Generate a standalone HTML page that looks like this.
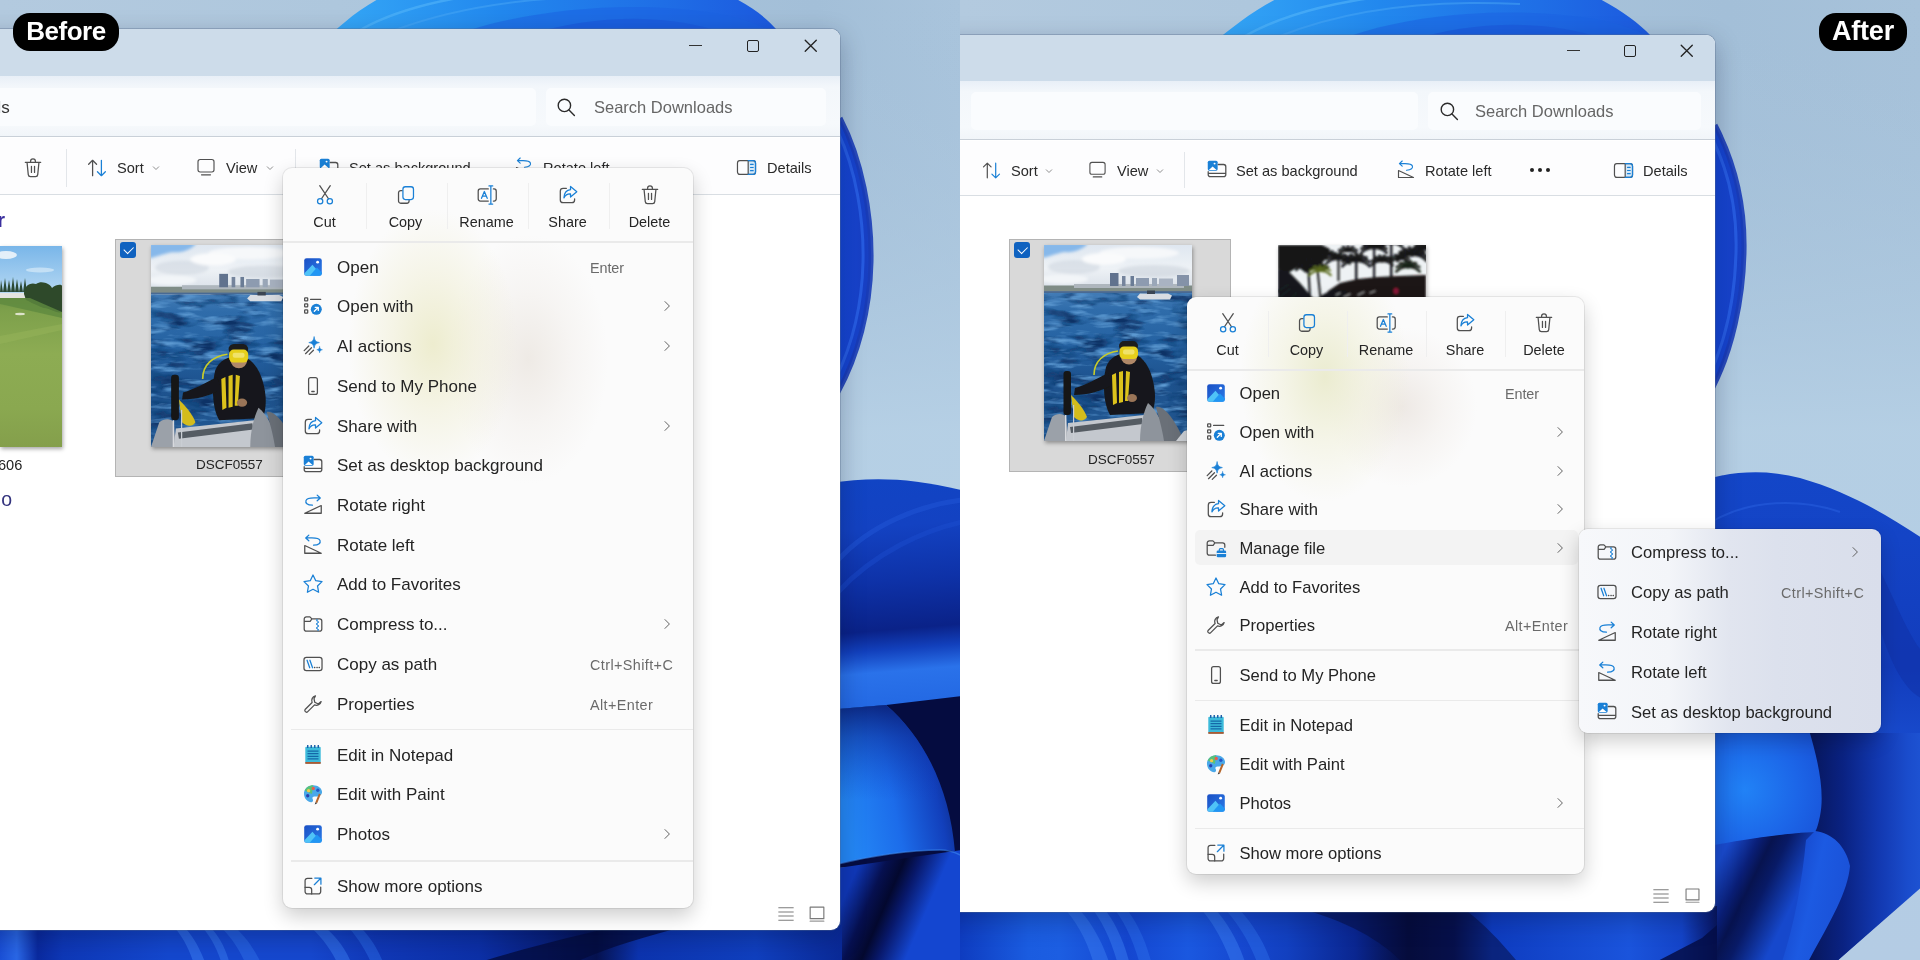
<!DOCTYPE html>
<html lang="en"><head><meta charset="utf-8"><title>Before / After context menu</title>
<style>
*{box-sizing:border-box;margin:0;padding:0}
html,body{width:1920px;height:960px;overflow:hidden;background:#a9c3db;font-family:"Liberation Sans",sans-serif}
.panel{position:absolute;top:0;width:960px;height:960px;overflow:hidden;will-change:transform}
.panel *{position:absolute}
.panel svg{position:static;display:block}
.wall{left:0;top:0;width:960px;height:960px}
.win{background:#fff;border-radius:9px;overflow:hidden;box-shadow:0 0 0 1px rgba(90,110,140,.35),0 8px 26px rgba(0,10,40,.28)}
.title{left:0;right:0;top:0;background:#cddcea}
.nav{left:0;right:0;background:linear-gradient(#e8eff7 0,#f3f7fb 18%,#f6f9fc 80%,#f1f5f9 100%);border-bottom:1.5px solid #c9d0d8}
.box{background:#fafcfe;border-radius:5px}
.tool{left:0;right:0;background:#fdfdfe;border-bottom:1.5px solid #d9dee3}
.wc-min{width:13px;height:1.3px;background:#333}
.wc-max{width:12px;height:12px;border:1.4px solid #222;border-radius:2px}
.t{white-space:nowrap;line-height:20px;color:#252525}
.tb{font-size:14.6px;color:#2a2a2a}
.hdr{font-size:17px;font-weight:bold;color:#3a2f9e;line-height:22px}
.vsep2{width:1px;background:#e3e6ea}
.tile{background:#d9d9d9;border:1px solid #b4b4b4}
.cb{left:4px;top:2px;width:16px;height:16px;border-radius:3px;background:#0f62c0}
.cb:after{content:"";position:absolute;left:4px;top:4px;width:8px;height:4.5px;border-left:1.4px solid #fff;border-bottom:1.4px solid #fff;transform:rotate(-45deg)}
.thumb{overflow:hidden;box-shadow:1px 2px 4px rgba(0,0,0,.35)}
.golf{overflow:hidden;box-shadow:1px 2px 4px rgba(0,0,0,.35)}
.palm{overflow:hidden;box-shadow:1px 2px 4px rgba(0,0,0,.3)}
.menu{background:#fbfbfb;border-radius:9px;box-shadow:0 0 0 1px rgba(0,0,0,.07),0 8px 20px rgba(0,0,0,.2);overflow:hidden}
.mi{left:0;right:0;color:#242424;white-space:nowrap}
.mic{top:50%;margin-top:-12.3px;margin-left:-.5px}
.mit{top:0}
.msc{top:0;font-size:14.4px;color:#6a6a6a;letter-spacing:.4px}
.mch{top:50%;margin-top:-9px}
.tbi{}
.tbl{width:80px;text-align:center;font-size:14.4px;line-height:20px;color:#252525}
.vsep{width:1px;background:#efefef}
.hsep{height:1.5px;background:#eaeaea}
.hl{background:#f3f3f3;border-radius:5px}
.sub{background:linear-gradient(90deg,#f7f8fb 0,#f3f5f9 30%,#eaedf4 40%,#e1e5ef 50%,#dce1ed 65%,#d9deeb 100%)}
.pill{height:38px;border-radius:17px;background:#000;color:#fff;font-weight:bold;font-size:26px;line-height:37px;text-align:center;letter-spacing:-.5px}
.dots i{width:4px;height:4px;border-radius:50%;background:#222;top:0}
.dots i:nth-child(2){left:8px}.dots i:nth-child(3){left:16px}
.glowL{left:0;top:1px;width:410px;height:420px;background:radial-gradient(ellipse 85px 135px at 150px 175px,rgba(234,233,196,.8),rgba(238,236,205,.45) 50%,rgba(244,243,225,0) 100%),radial-gradient(ellipse 80px 125px at 245px 190px,rgba(233,227,220,.7),rgba(238,233,228,.35) 55%,rgba(245,243,240,0) 100%)}
.glowR{left:0;top:0;width:397px;height:300px;background:radial-gradient(ellipse 85px 125px at 138px 80px,rgba(232,233,200,.85),rgba(237,237,208,.45) 50%,rgba(244,244,228,0) 100%),radial-gradient(ellipse 75px 80px at 215px 110px,rgba(232,225,219,.7),rgba(238,232,227,.35) 55%,rgba(245,243,240,0) 100%)}

</style></head>
<body>
<div class="panel" style="left:0">
<div class="wall"><svg width="960" height="960" viewBox="0 0 960 960">
<defs><linearGradient id="bga" x1="0" y1="0" x2="1" y2="0"><stop offset="0" stop-color="#b3cadf"/><stop offset="0.35" stop-color="#aec7dd"/><stop offset="0.85" stop-color="#a3bfd8"/><stop offset="1" stop-color="#a9c4dc"/></linearGradient><linearGradient id="bgva" x1="0" y1="0" x2="0" y2="1"><stop offset="0" stop-color="#a3bfd8" stop-opacity="0"/><stop offset=".45" stop-color="#b7d1e6" stop-opacity=".9"/><stop offset="1" stop-color="#b7d1e6"/></linearGradient><linearGradient id="domea" x1="338" y1="0" x2="880" y2="0" gradientUnits="userSpaceOnUse"><stop offset="0" stop-color="#34a6f6"/><stop offset="0.3" stop-color="#2288ee"/><stop offset="0.6" stop-color="#1f6ee6"/><stop offset="0.82" stop-color="#1c58de"/><stop offset="0.93" stop-color="#1546d4"/><stop offset="1" stop-color="#1a3cba"/></linearGradient><linearGradient id="lba" x1="850" y1="480" x2="870" y2="725" gradientUnits="userSpaceOnUse"><stop offset="0" stop-color="#1144c4"/><stop offset="0.2" stop-color="#1342c2"/><stop offset="0.42" stop-color="#0e32a8"/><stop offset="0.62" stop-color="#0a2288"/><stop offset="0.7" stop-color="#1240bc"/><stop offset="0.79" stop-color="#2a72ea"/><stop offset="1" stop-color="#2064e0"/></linearGradient><linearGradient id="peta" x1="840" y1="790" x2="962" y2="765" gradientUnits="userSpaceOnUse"><stop offset="0" stop-color="#2488f6"/><stop offset="0.4" stop-color="#1c6cea"/><stop offset="0.75" stop-color="#1240bc"/><stop offset="1" stop-color="#0a2070"/></linearGradient><linearGradient id="petsh" x1="0" y1="704" x2="0" y2="800" gradientUnits="userSpaceOnUse"><stop offset="0" stop-color="#081a6e" stop-opacity=".85"/><stop offset=".35" stop-color="#0c2a90" stop-opacity=".5"/><stop offset="1" stop-color="#1040c0" stop-opacity="0"/></linearGradient><linearGradient id="bota" x1="0" y1="0" x2="840" y2="0" gradientUnits="userSpaceOnUse"><stop offset="0" stop-color="#1a50d8"/><stop offset="0.02" stop-color="#2a68e8"/><stop offset="0.045" stop-color="#0a2aa0"/><stop offset="0.075" stop-color="#0e38b8"/><stop offset="0.2" stop-color="#1448d0"/><stop offset="0.37" stop-color="#1648d0"/><stop offset="0.45" stop-color="#1038b8"/><stop offset="0.57" stop-color="#0c30a8"/><stop offset="0.65" stop-color="#08207c"/><stop offset="0.71" stop-color="#061250"/><stop offset="0.76" stop-color="#0c34b0"/><stop offset="0.9" stop-color="#1040c0"/><stop offset="1" stop-color="#0a2a98"/></linearGradient><linearGradient id="bot2a" x1="848" y1="889" x2="922" y2="921" gradientUnits="userSpaceOnUse"><stop offset="0" stop-color="#1038b8"/><stop offset="0.3" stop-color="#061050"/><stop offset="0.5" stop-color="#03082e"/><stop offset="0.68" stop-color="#08186a"/><stop offset="1" stop-color="#1446d0"/></linearGradient></defs>
<rect width="960" height="960" fill="url(#bga)"/>
<rect x="835" y="0" width="125" height="960" fill="url(#bgva)"/>
<path d="M318 46 C338 28 356 10 384 -4 L730 -4 C752 6 766 18 777 30 C806 56 826 88 840 118 C862 160 872 215 871 262 C870 310 858 356 838 392 L700 392 L700 46 Z" fill="url(#domea)"/>
<path d="M360 30 C420 -4 520 -14 600 -12" stroke="#58b8fa" stroke-width="2.5" fill="none" opacity=".55"/>
<path d="M395 30 C470 2 560 -6 640 -2" stroke="#49a8f6" stroke-width="2" fill="none" opacity=".5"/>
<path d="M470 30 C540 8 640 0 720 14 C745 19 760 26 770 30 Z" fill="#1b62e2" opacity=".55"/>
<path d="M545 30 C600 16 660 14 715 30 Z" fill="#1a56da" opacity=".6"/>
<path d="M840 118 C862 160 872 215 871 262 C870 310 858 356 838 392" stroke="#1a3cb6" stroke-width="5" fill="none" opacity=".9"/>
<path d="M838 132 C856 170 864 220 863 262 C862 305 852 345 836 378" stroke="#2a62e6" stroke-width="3" fill="none" opacity=".8"/>
<path d="M830 483 C870 477 910 477 965 491 L965 730 L830 730 Z" fill="url(#lba)"/>
<path d="M838 560 C870 525 920 505 962 500" stroke="#2458da" stroke-width="5" fill="none" opacity=".45"/>
<path d="M838 592 C875 552 925 530 962 522" stroke="#1e50d2" stroke-width="5" fill="none" opacity=".4"/>
<path d="M838 709 L886 705 L962 696 L962 860 L838 868 Z" fill="#050c40"/>
<path d="M838 868 L838 965 L962 965 L962 850 Z" fill="url(#bot2a)"/>
<path d="M838 709 L886 705 C925 738 950 790 955 852 C950 850 945 850 940 850 C910 850 870 856 838 864 Z" fill="url(#peta)"/>
<path d="M838 709 L886 705 C925 738 950 790 955 852 C950 850 945 850 940 850 C910 850 870 856 838 864 Z" fill="url(#petsh)"/>
<path d="M838 864 C870 856 910 850 940 850 C948 850 955 852 962 856" stroke="#3f8ef4" stroke-width="1.5" fill="none" opacity=".55"/>
<rect x="0" y="925" width="842" height="40" fill="url(#bota)"/>
<path d="M172 925 C182 935 190 950 194 965 L206 965 C200 948 192 934 182 925 Z" fill="#3a7cf0" opacity=".55"/>
<path d="M200 925 C210 935 218 950 222 965 L230 965 C226 948 218 934 208 925 Z" fill="#3a7cf0" opacity=".5"/>
<path d="M218 925 C230 935 240 950 246 965 L262 965 C254 948 244 934 232 925 Z" fill="#2f70ea" opacity=".5"/>
<path d="M308 925 C320 935 332 950 338 965 L352 965 C346 948 334 934 322 925 Z" fill="#3a7cf0" opacity=".5"/>
<path d="M346 925 C356 935 366 950 372 965 L384 965 C378 948 368 934 358 925 Z" fill="#2f70ea" opacity=".45"/>
<path d="M470 965 C520 950 570 936 625 925 L690 925 C640 938 600 950 570 965 Z" fill="#040c3e" opacity=".75"/>
</svg></div>
<div class="win" style="left:-30px;top:28.6px;width:870px;height:901.4px">
<div class="title" style="height:47.4px"></div>
<div class="nav" style="top:47.4px;height:61px"><div class="box" style="left:0;top:12px;width:566px;height:38px"></div><div class="box" style="left:576px;top:12px;width:280px;height:38px"></div></div>
<div class="tool" style="top:109.4px;height:57px"></div>
</div>
<i class="wc-min" style="left:689px;top:45px"></i><i class="wc-max" style="left:747px;top:40px"></i>
<span class="wc-x" style="left:803.2px;top:38.3px"><svg width="15.5" height="15.5" viewBox="0 0 14 14" fill="none" stroke-linecap="round" stroke-linejoin="round" stroke-width="1.15" ><path d='M2 2 L12 12 M12 2 L2 12' stroke='#222' stroke-width='1.2'/></svg></span>
<span class="t" style="left:-31px;top:98px;font-size:17px;color:#333">loads</span>
<span class="abs" style="left:556px;top:97px"><svg width="20" height="20" viewBox="0 0 20 20" fill="none" stroke-linecap="round" stroke-linejoin="round" stroke-width="1.15" ><circle cx="8.4" cy="8.4" r="6.2" stroke="#2b2b2b" stroke-width="1.4"/><path d="M13 13 L18.4 18.4" stroke="#2b2b2b" stroke-width="1.4"/></svg></span>
<span class="t" style="left:594px;top:97px;font-size:16.5px;color:#666">Search Downloads</span>
<span class="abs" style="left:22px;top:157px"><svg width="22" height="22" viewBox="0 0 20 20" fill="none" stroke-linecap="round" stroke-linejoin="round" stroke-width="1.15" ><path d="M3 4.8 H17 M7.8 4.6 V3.8 A2.2 2.2 0 0 1 12.2 3.8 V4.6 M4.6 5 L5.7 16 A2 2 0 0 0 7.7 17.8 H12.3 A2 2 0 0 0 14.3 16 L15.4 5 M8.6 8.5 V14 M11.4 8.5 V14" stroke="#505050"/></svg></span>
<i class="vsep2" style="left:66px;top:149px;height:38px"></i>
<span class="abs" style="left:86px;top:157px"><svg width="22" height="22" viewBox="0 0 20 20" fill="none" stroke-linecap="round" stroke-linejoin="round" stroke-width="1.15" ><path d="M6 17 V3 M2.4 6.6 L6 3 L9.6 6.6" stroke="#505050"/><path d="M14 3 V17 M10.4 13.4 L14 17 L17.6 13.4" stroke="#1a80d6"/></svg></span><span class="t tb" style="left:117px;top:158px">Sort</span><span class="abs" style="left:150px;top:162px"><svg width="12" height="12" viewBox="0 0 20 20" fill="none" stroke-linecap="round" stroke-linejoin="round" stroke-width="1.15" ><path d="M5.5 8 L10 12.5 L14.5 8" stroke="#8a8a8a" stroke-width="1.6"/></svg></span>
<span class="abs" style="left:196px;top:157px"><svg width="20" height="20" viewBox="0 0 20 20" fill="none" stroke-linecap="round" stroke-linejoin="round" stroke-width="1.15" ><rect x="2" y="2.5" width="16" height="12.5" rx="2.2" stroke="#505050"/><path d="M5.5 17.8 H14.5" stroke="#505050"/></svg></span><span class="t tb" style="left:226px;top:158px">View</span><span class="abs" style="left:264px;top:162px"><svg width="12" height="12" viewBox="0 0 20 20" fill="none" stroke-linecap="round" stroke-linejoin="round" stroke-width="1.15" ><path d="M5.5 8 L10 12.5 L14.5 8" stroke="#8a8a8a" stroke-width="1.6"/></svg></span>
<i class="vsep2" style="left:295px;top:149px;height:38px"></i>
<span class="abs" style="left:318px;top:157px"><svg width="22" height="22" viewBox="0 0 20 20" fill="none" stroke-linecap="round" stroke-linejoin="round" stroke-width="1.15" ><path d="M11 5 H16 A2 2 0 0 1 18 7 V14 A2 2 0 0 1 16 16 H4 A2 2 0 0 1 2 14 V11.5 M2.2 13 H17.8" stroke="#505050"/><rect x="1.6" y="1.6" width="9" height="9" rx="1.4" fill="#1a80d6" stroke="none"/><path d="M2.6 10 L6 6.8 L9.6 10 Z" fill="#fff" stroke="none"/><circle cx="7.8" cy="4.2" r=".9" fill="#fff" stroke="none"/></svg></span><span class="t tb" style="left:349px;top:158px">Set as background</span>
<span class="abs" style="left:514px;top:157px"><svg width="20" height="20" viewBox="0 0 20 20" fill="none" stroke-linecap="round" stroke-linejoin="round" stroke-width="1.15" ><path d="M17.5 17.5 H2.5 V10.5 Z" stroke="#505050"/><path d="M10.5 10.2 C15.5 10 17 8 16.4 6 C15.8 4.2 13 3.6 9 3.6 H3.6 M6.2 1 L3.4 3.6 L6.2 6.2" stroke="#1a80d6"/></svg></span><span class="t tb" style="left:543px;top:158px">Rotate left</span>
<span class="abs" style="left:736px;top:157px"><svg width="21" height="21" viewBox="0 0 20 20" fill="none" stroke-linecap="round" stroke-linejoin="round" stroke-width="1.15" ><path d="M11.6 3.4 H16.4 A2.2 2.2 0 0 1 18.6 5.6 V14.4 A2.2 2.2 0 0 1 16.4 16.6 H11.6 Z" fill="#d4e9f9" stroke="none"/><rect x="1.4" y="3.4" width="17.2" height="13.2" rx="2.2" stroke="#505050"/><path d="M11.6 3.4 V16.6" stroke="#505050"/><path d="M13.8 7 H16.4 M13.8 10 H16.4 M13.8 13 H16.4" stroke="#1a80d6"/><path d="M11.6 3.4 H16.4 A2.2 2.2 0 0 1 18.6 5.6 V14.4 A2.2 2.2 0 0 1 16.4 16.6 H11.6" stroke="#1a80d6"/></svg></span><span class="t tb" style="left:767px;top:158px">Details</span>
<span class="t hdr" style="left:-2.8px;top:209px;font-size:20px">r</span>
<div class="golf" style="left:0px;top:245.5px;width:62px;height:201px"><svg width="62" height="201" viewBox="0 0 62 201">
<defs>
<linearGradient id="gsky" x1="0" y1="0" x2="0" y2="1"><stop offset="0" stop-color="#79b6e9"/><stop offset="1" stop-color="#b9daf3"/></linearGradient>
<linearGradient id="ggr" x1="0" y1="46" x2="0" y2="201" gradientUnits="userSpaceOnUse"><stop offset="0" stop-color="#6b9143"/><stop offset=".12" stop-color="#7da04b"/><stop offset=".4" stop-color="#8dac53"/><stop offset=".75" stop-color="#8aa850"/><stop offset="1" stop-color="#849f4b"/></linearGradient>
<filter id="gbl" x="-5%" y="-5%" width="110%" height="110%"><feGaussianBlur stdDeviation=".6"/></filter>
</defs>
<rect width="62" height="201" fill="url(#ggr)"/>
<rect width="62" height="50" fill="url(#gsky)"/>
<g filter="url(#gbl)">
<ellipse cx="6" cy="9" rx="11" ry="4" fill="#eef5fb" opacity=".9"/>
<ellipse cx="40" cy="24" rx="14" ry="2.5" fill="#d6eaf8" opacity=".7"/>
<path d="M0 46 L1 34 L3 46 L5 32 L7 46 L9 34 L11 46 L13 31 L15 46 L17 33 L19 46 L21 35 L23 46 L25 32 L27 46 Z" fill="#2c4a34"/>
<rect x="0" y="47" width="28" height="5" fill="#e4e4e0"/>
<path d="M24 48 C24 40 30 36 36 38 C42 34 50 38 52 42 C56 38 62 38 62 40 V66 C56 68 50 62 44 62 C38 60 30 56 26 54 Z" fill="#2d4a2a"/>
<path d="M0 52 H30 L62 66 V72 L0 58 Z" fill="#5f8a3e" opacity=".8"/>
<ellipse cx="20" cy="68" rx="5" ry="1.2" fill="#e8ead8" opacity=".9"/>
<path d="M0 90 L62 78 V84 L0 98 Z" fill="#96b35a" opacity=".5"/>
</g></svg></div>
<span class="t" style="left:-2px;top:455px;font-size:14.6px;color:#222">606</span>
<span class="t" style="left:1.2px;top:488px;font-size:19.5px;color:#34347e;line-height:22px">o</span>
<div class="tile" style="left:115px;top:239px;width:228px;height:238px"><i class="cb"></i>
<div class="thumb" style="left:35px;top:5px;width:153px;height:202px"><svg width="100%" height="100%" viewBox="0 0 148 196" preserveAspectRatio="none">
<defs>
<linearGradient id="seaa" x1="0" y1="47" x2="0" y2="196" gradientUnits="userSpaceOnUse"><stop offset="0" stop-color="#437cb6"/><stop offset=".12" stop-color="#2f6caa"/><stop offset=".35" stop-color="#2562a2"/><stop offset=".6" stop-color="#1d528e"/><stop offset="1" stop-color="#225892"/></linearGradient>
<linearGradient id="skya" x1="0" y1="0" x2="0" y2="47" gradientUnits="userSpaceOnUse"><stop offset="0" stop-color="#dfe7f0"/><stop offset=".5" stop-color="#eef2f6"/><stop offset="1" stop-color="#d6dde6"/></linearGradient>
<filter id="wda" color-interpolation-filters="sRGB" x="0" y="0" width="100%" height="100%"><feTurbulence type="fractalNoise" baseFrequency="0.03 0.1" numOctaves="3" seed="4"/><feColorMatrix type="matrix" values="0 0 0 0 0.05  0 0 0 0 0.2  0 0 0 0 0.4  3 0 0 0 -1.36"/></filter>
<filter id="wla" color-interpolation-filters="sRGB" x="0" y="0" width="100%" height="100%"><feTurbulence type="fractalNoise" baseFrequency="0.04 0.16" numOctaves="3" seed="11"/><feColorMatrix type="matrix" values="0 0 0 0 0.36  0 0 0 0 0.6  0 0 0 0 0.82  3 0 0 0 -1.5"/></filter>
<filter id="bla" x="-5%" y="-5%" width="110%" height="110%"><feGaussianBlur stdDeviation=".7"/></filter>
<filter id="bl2a" x="-5%" y="-5%" width="110%" height="110%"><feGaussianBlur stdDeviation="1.6"/></filter>
</defs>
<rect width="148" height="196" fill="url(#seaa)"/>
<rect width="148" height="48" fill="url(#skya)"/>
<g filter="url(#bl2a)">
<path d="M-2 -2 H44 C40 4 30 8 20 7 C10 9 4 12 -2 13 Z" fill="#86b8ea"/>
<ellipse cx="30" cy="22" rx="26" ry="7" fill="#c9d2dc" opacity=".5"/>
<ellipse cx="95" cy="8" rx="40" ry="6" fill="#f6f8fa"/>
<ellipse cx="110" cy="26" rx="36" ry="6" fill="#c9d0d9" opacity=".55"/>
<ellipse cx="60" cy="14" rx="22" ry="6" fill="#fafbfc"/>
<ellipse cx="20" cy="34" rx="24" ry="5" fill="#f2f5f8"/>
</g>
<g filter="url(#bla)">
<rect x="-1" y="40.5" width="150" height="6.5" fill="#7f8c86"/>
<rect x="30" y="39" width="110" height="4" fill="#aeb6bd"/>
<rect x="66" y="28" width="8.5" height="13" fill="#60728e"/><rect x="78" y="31" width="3.5" height="10" fill="#74849c"/><rect x="86.5" y="31" width="3.5" height="10" fill="#6b7c96"/><rect x="92" y="33" width="13" height="8" fill="#8d9bb0"/><rect x="108" y="33" width="5" height="8" fill="#9aa7b8"/><rect x="115" y="33.5" width="14" height="7.5" fill="#a9b3c2"/><rect x="133" y="30" width="12" height="11" fill="#8492a8"/>
<rect x="-1" y="46.2" width="150" height="1.8" fill="#4a6a94"/>
<rect x="0" y="48" width="148" height="148" filter="url(#wda)"/><rect x="0" y="48" width="148" height="148" filter="url(#wla)"/>
<path d="M93 52 L96 48.5 H124 L128 50.5 L126 54.5 H96 Z" fill="#d9dde3"/><rect x="103" y="45.5" width="8" height="3.5" fill="#3a4452"/>
<path d="M50 130 C50 116 60 108 74 106" stroke="#c8cc2a" stroke-width="1.6" fill="none"/>
<path d="M62 122 C66 112 74 108 86 108 C96 109 104 118 108 132 C112 146 112 158 108 168 L66 170 C60 160 58 140 62 122 Z" fill="#17181a"/>
<path d="M64 128 C52 134 42 140 31 143 L30 150 C44 150 58 146 68 140 Z" fill="#17181a"/>
<rect x="75" y="96" width="19" height="10" rx="5" fill="#1c1c1c"/>
<ellipse cx="85" cy="112" rx="8" ry="7.5" fill="#b08868"/>
<rect x="75.5" y="101.5" width="18.5" height="12.5" rx="4.5" fill="#e6cf1c"/><rect x="79" y="104.5" width="11.5" height="5" rx="2" fill="#f0e26a"/>
<path d="M68 130 L72 128 L73 158 L69 160 Z M75 127 L79 126 L79 157 L75 158 Z M82 126 L86 127 L84 156 L81 156 Z" fill="#dcc21e"/>
<ellipse cx="88" cy="153" rx="5" ry="4" fill="#9a7458"/>
<rect x="19.5" y="126" width="7.5" height="44" rx="3" fill="#141516"/>
<path d="M27 150 C33 156 40 164 43 172 C40 177 34 176 30 172 Z" fill="#d4bc1c"/>
<path d="M0 196 L8 172 C12 168 20 168 22 172 L24 196 Z" fill="#9ba1a9"/>
<path d="M22 196 L24 178 L100 170 L104 196 Z" fill="#c4c8ce"/>
<path d="M26 182 L98 173 L99 179 L27 188 Z" fill="#555b63"/>
<path d="M96 196 C96 180 100 166 104 158 C112 164 120 180 124 196 Z" fill="#8e949c"/>
<path d="M120 196 C118 182 114 170 112 162 C120 160 132 176 140 196 Z" fill="#6a7078"/>
<path d="M132 196 L140 186 L148 184 V196 Z" fill="#d0d4d9"/>
<rect x="21" y="170" width="1.4" height="26" fill="#d8dade"/><rect x="29" y="160" width="1.2" height="36" fill="#caced4"/>
</g>
</svg></div>
<span class="t" style="left:80px;top:215px;font-size:13.5px;color:#222">DSCF0557</span></div>
<span class="abs" style="left:776.5px;top:905px"><svg width="18" height="18" viewBox="0 0 20 20" fill="none" stroke-linecap="round" stroke-linejoin="round" stroke-width="1.15" ><path d="M1.5 3 H18.5 M1.5 7.7 H18.5 M1.5 12.3 H18.5 M1.5 17 H18.5" stroke="#7c7c7c" stroke-width="1.2" stroke-linecap="butt"/></svg></span><span class="abs" style="left:808px;top:905px"><svg width="18" height="18" viewBox="0 0 20 20" fill="none" stroke-linecap="round" stroke-linejoin="round" stroke-width="1.15" ><rect x="2.4" y="2.4" width="15.2" height="12.8" stroke="#7a7a7a" stroke-width="1.3"/><path d="M2.4 18 H17.6" stroke="#999" stroke-width="1.3"/></svg></span>
<div class="menu" style="left:283px;top:168px;width:410px;height:740px"><div class="glowL"></div>
<span class="tbi" style="left:30.5px;top:15.5px"><svg width="22" height="22" viewBox="0 0 20 20" fill="none" stroke-linecap="round" stroke-linejoin="round" stroke-width="1.15" ><path d="M5.2 1.5 L13.2 13.4 M14.8 1.5 L6.8 13.4" stroke="#505050"/><circle cx="5.6" cy="15.6" r="2.4" stroke="#1a80d6"/><circle cx="14.4" cy="15.6" r="2.4" stroke="#1a80d6"/></svg></span><span class="tbl" style="left:1.5px;top:43.5px">Cut</span><span class="tbi" style="left:111.5px;top:15.5px"><svg width="22" height="22" viewBox="0 0 20 20" fill="none" stroke-linecap="round" stroke-linejoin="round" stroke-width="1.15" ><path d="M6.5 6 H5.2 A2 2 0 0 0 3.2 8 V15.5 A2 2 0 0 0 5.2 17.5 H10.8 A2 2 0 0 0 12.8 15.5 V14.5" stroke="#505050"/><rect x="7.2" y="2.5" width="9.6" height="11.6" rx="2.2" stroke="#1a80d6"/></svg></span><span class="tbl" style="left:82.5px;top:43.5px">Copy</span><span class="tbi" style="left:192.5px;top:15.5px"><svg width="22" height="22" viewBox="0 0 20 20" fill="none" stroke-linecap="round" stroke-linejoin="round" stroke-width="1.15" ><path d="M11.2 4.5 H4 A2 2 0 0 0 2 6.5 V13.5 A2 2 0 0 0 4 15.5 H11.2 M15.8 4.5 H16.4 A2 2 0 0 1 18.4 6.5 V13.5 A2 2 0 0 1 16.4 15.5 H15.8" stroke="#505050"/><path d="M5 13 L7.6 6.8 L10.2 13 M5.9 11 H9.3" stroke="#1a80d6"/><path d="M13.5 1.8 V18.2 M11.8 1.8 H15.2 M11.8 18.2 H15.2" stroke="#1a80d6"/></svg></span><span class="tbl" style="left:163.5px;top:43.5px">Rename</span><span class="tbi" style="left:273.5px;top:15.5px"><svg width="22" height="22" viewBox="0 0 20 20" fill="none" stroke-linecap="round" stroke-linejoin="round" stroke-width="1.15" ><path d="M8.5 4 H5.5 A2.5 2.5 0 0 0 3 6.5 V14.5 A2.5 2.5 0 0 0 5.5 17 H13.5 A2.5 2.5 0 0 0 16 14.5 V13.5" stroke="#505050"/><path d="M12.3 2.2 L18 7 L12.3 11.8 V9 C9.5 8.8 7.6 10 6.3 12.6 C6.5 8.4 8.6 5.6 12.3 5.2 Z" stroke="#1a80d6"/></svg></span><span class="tbl" style="left:244.5px;top:43.5px">Share</span><span class="tbi" style="left:355.5px;top:15.5px"><svg width="22" height="22" viewBox="0 0 20 20" fill="none" stroke-linecap="round" stroke-linejoin="round" stroke-width="1.15" ><path d="M3 4.8 H17 M7.8 4.6 V3.8 A2.2 2.2 0 0 1 12.2 3.8 V4.6 M4.6 5 L5.7 16 A2 2 0 0 0 7.7 17.8 H12.3 A2 2 0 0 0 14.3 16 L15.4 5 M8.6 8.5 V14 M11.4 8.5 V14" stroke="#505050"/></svg></span><span class="tbl" style="left:326.5px;top:43.5px">Delete</span><i class="vsep" style="left:83px;top:15px;height:46px"></i><i class="vsep" style="left:164px;top:15px;height:46px"></i><i class="vsep" style="left:245px;top:15px;height:46px"></i><i class="vsep" style="left:326px;top:15px;height:46px"></i>
<i class="hsep" style="top:73px;left:0;right:0"></i>
<div class="mi" style="top:81px;height:38px;line-height:38px;font-size:17px"><span class="mic" style="left:19px"><svg width="22" height="22" viewBox="0 0 20 20" fill="none" stroke-linecap="round" stroke-linejoin="round" stroke-width="1.15" ><defs><linearGradient id="pg17" x1="0" y1="0" x2="1" y2="1"><stop offset="0" stop-color="#1a4fc4"/><stop offset="1" stop-color="#2a7be8"/></linearGradient></defs><rect x="2" y="2" width="16" height="16" rx="2.2" fill="url(#pg17)" stroke="none"/><path d="M2 16 L9.5 8 L13 12 L10 18 H4.2 A2.2 2.2 0 0 1 2 15.8 Z" fill="#4fc3f7" stroke="none"/><path d="M7 18 L13.6 10.5 L18 15 V15.8 A2.2 2.2 0 0 1 15.8 18 Z" fill="#2196f3" stroke="none"/><circle cx="14.2" cy="5.6" r="1.3" fill="#fff" stroke="none"/></svg></span><span class="mit" style="left:54px">Open</span><span class="msc" style="left:307px;letter-spacing:-.1px">Enter</span></div>
<div class="mi" style="top:120px;height:38px;line-height:38px;font-size:17px"><span class="mic" style="left:19px"><svg width="22" height="22" viewBox="0 0 20 20" fill="none" stroke-linecap="round" stroke-linejoin="round" stroke-width="1.15" ><rect x="2.4" y="2.6" width="2.8" height="2.8" rx=".6" stroke="#505050"/><rect x="2.4" y="8.1" width="2.8" height="2.8" rx=".6" stroke="#505050"/><rect x="2.4" y="13.6" width="2.8" height="2.8" rx=".6" stroke="#505050"/><path d="M7.8 4 H17" stroke="#505050"/><circle cx="13" cy="13" r="5" fill="#1a80d6" stroke="none"/><path d="M11.2 14.8 L14.6 11.4 M12 11.2 H14.8 V14" stroke="#fff" stroke-width="1.2"/></svg></span><span class="mit" style="left:54px">Open with</span><span class="mch" style="left:376px"><svg width="16" height="16" viewBox="0 0 20 20" fill="none" stroke-linecap="round" stroke-linejoin="round" stroke-width="1.15" ><path d="M7.5 4.5 L13 10 L7.5 15.5" stroke="#5a5a5a" stroke-width="1.2"/></svg></span></div>
<div class="mi" style="top:160px;height:38px;line-height:38px;font-size:17px"><span class="mic" style="left:19px"><svg width="22" height="22" viewBox="0 0 20 20" fill="none" stroke-linecap="round" stroke-linejoin="round" stroke-width="1.15" ><path d="M11 1.8 C11.5 5 12.4 6.2 15.8 6.9 C12.4 7.6 11.5 8.8 11 12 C10.5 8.8 9.6 7.6 6.2 6.9 C9.6 6.2 10.5 5 11 1.8 Z" fill="#1a80d6" stroke="#1a80d6" stroke-width=".6"/><path d="M16 10.6 C16.3 12.4 16.8 13 18.6 13.4 C16.8 13.8 16.3 14.4 16 16.2 C15.7 14.4 15.2 13.8 13.4 13.4 C15.2 13 15.7 12.4 16 10.6 Z" fill="#1a80d6" stroke="#1a80d6" stroke-width=".4"/><path d="M2 14.2 L6.2 10 M3.2 17 L8.6 11.6 M6.6 17.6 L10.4 13.8" stroke="#505050"/></svg></span><span class="mit" style="left:54px">AI actions</span><span class="mch" style="left:376px"><svg width="16" height="16" viewBox="0 0 20 20" fill="none" stroke-linecap="round" stroke-linejoin="round" stroke-width="1.15" ><path d="M7.5 4.5 L13 10 L7.5 15.5" stroke="#5a5a5a" stroke-width="1.2"/></svg></span></div>
<div class="mi" style="top:200px;height:38px;line-height:38px;font-size:17px"><span class="mic" style="left:19px"><svg width="22" height="22" viewBox="0 0 20 20" fill="none" stroke-linecap="round" stroke-linejoin="round" stroke-width="1.15" ><rect x="6" y="2.4" width="8" height="15.2" rx="1.8" stroke="#505050"/><path d="M8.9 15 H11.1" stroke="#505050"/></svg></span><span class="mit" style="left:54px">Send to My Phone</span></div>
<div class="mi" style="top:240px;height:38px;line-height:38px;font-size:17px"><span class="mic" style="left:19px"><svg width="22" height="22" viewBox="0 0 20 20" fill="none" stroke-linecap="round" stroke-linejoin="round" stroke-width="1.15" ><path d="M8.5 4 H5.5 A2.5 2.5 0 0 0 3 6.5 V14.5 A2.5 2.5 0 0 0 5.5 17 H13.5 A2.5 2.5 0 0 0 16 14.5 V13.5" stroke="#505050"/><path d="M12.3 2.2 L18 7 L12.3 11.8 V9 C9.5 8.8 7.6 10 6.3 12.6 C6.5 8.4 8.6 5.6 12.3 5.2 Z" stroke="#1a80d6"/></svg></span><span class="mit" style="left:54px">Share with</span><span class="mch" style="left:376px"><svg width="16" height="16" viewBox="0 0 20 20" fill="none" stroke-linecap="round" stroke-linejoin="round" stroke-width="1.15" ><path d="M7.5 4.5 L13 10 L7.5 15.5" stroke="#5a5a5a" stroke-width="1.2"/></svg></span></div>
<div class="mi" style="top:279px;height:38px;line-height:38px;font-size:17px"><span class="mic" style="left:19px"><svg width="22" height="22" viewBox="0 0 20 20" fill="none" stroke-linecap="round" stroke-linejoin="round" stroke-width="1.15" ><path d="M11 5 H16 A2 2 0 0 1 18 7 V14 A2 2 0 0 1 16 16 H4 A2 2 0 0 1 2 14 V11.5 M2.2 13 H17.8" stroke="#505050"/><rect x="1.6" y="1.6" width="9" height="9" rx="1.4" fill="#1a80d6" stroke="none"/><path d="M2.6 10 L6 6.8 L9.6 10 Z" fill="#fff" stroke="none"/><circle cx="7.8" cy="4.2" r=".9" fill="#fff" stroke="none"/></svg></span><span class="mit" style="left:54px">Set as desktop background</span></div>
<div class="mi" style="top:319px;height:38px;line-height:38px;font-size:17px"><span class="mic" style="left:19px"><svg width="22" height="22" viewBox="0 0 20 20" fill="none" stroke-linecap="round" stroke-linejoin="round" stroke-width="1.15" ><path d="M2.5 17.5 H17.5 V10.5 Z" stroke="#505050"/><path d="M9.5 10.2 C4.5 10 3 8 3.6 6 C4.2 4.2 7 3.6 11 3.6 H16.4 M13.8 1 L16.6 3.6 L13.8 6.2" stroke="#1a80d6"/></svg></span><span class="mit" style="left:54px">Rotate right</span></div>
<div class="mi" style="top:359px;height:38px;line-height:38px;font-size:17px"><span class="mic" style="left:19px"><svg width="22" height="22" viewBox="0 0 20 20" fill="none" stroke-linecap="round" stroke-linejoin="round" stroke-width="1.15" ><path d="M17.5 17.5 H2.5 V10.5 Z" stroke="#505050"/><path d="M10.5 10.2 C15.5 10 17 8 16.4 6 C15.8 4.2 13 3.6 9 3.6 H3.6 M6.2 1 L3.4 3.6 L6.2 6.2" stroke="#1a80d6"/></svg></span><span class="mit" style="left:54px">Rotate left</span></div>
<div class="mi" style="top:398px;height:38px;line-height:38px;font-size:17px"><span class="mic" style="left:19px"><svg width="22" height="22" viewBox="0 0 20 20" fill="none" stroke-linecap="round" stroke-linejoin="round" stroke-width="1.15" ><path d="M10 1.8 L12.5 7 L18.2 7.8 L14.1 11.8 L15.1 17.5 L10 14.8 L4.9 17.5 L5.9 11.8 L1.8 7.8 L7.5 7 Z" stroke="#1a80d6"/></svg></span><span class="mit" style="left:54px">Add to Favorites</span></div>
<div class="mi" style="top:438px;height:38px;line-height:38px;font-size:17px"><span class="mic" style="left:19px"><svg width="22" height="22" viewBox="0 0 20 20" fill="none" stroke-linecap="round" stroke-linejoin="round" stroke-width="1.15" ><path d="M2 5.5 A2 2 0 0 1 4 3.5 H7.2 L9 5.3 H16 A2 2 0 0 1 18 7.3 V14.5 A2 2 0 0 1 16 16.5 H4 A2 2 0 0 1 2 14.5 Z M2 7.6 H7.4 L9 5.4" stroke="#505050"/><path d="M13.6 5.6 V7.4 M14.6 7.4 V9.2 M13.6 9.2 V11 M14.6 11 V12.8 M13.6 12.8 V14.6 M14.6 14.6 V16.2" stroke="#1a80d6" stroke-width="1.3" stroke-linecap="butt"/></svg></span><span class="mit" style="left:54px">Compress to...</span><span class="mch" style="left:376px"><svg width="16" height="16" viewBox="0 0 20 20" fill="none" stroke-linecap="round" stroke-linejoin="round" stroke-width="1.15" ><path d="M7.5 4.5 L13 10 L7.5 15.5" stroke="#5a5a5a" stroke-width="1.2"/></svg></span></div>
<div class="mi" style="top:478px;height:38px;line-height:38px;font-size:17px"><span class="mic" style="left:19px"><svg width="22" height="22" viewBox="0 0 20 20" fill="none" stroke-linecap="round" stroke-linejoin="round" stroke-width="1.15" ><rect x="1.8" y="4" width="16.4" height="12" rx="2.2" stroke="#505050"/><path d="M4.6 6.6 L7 13.4 M7.2 6.6 L9.6 13.4" stroke="#1a80d6"/><path d="M11.4 13.2 H11.6 M13.6 13.2 H13.8 M15.6 13.2 H15.8" stroke="#505050" stroke-width="1.3"/></svg></span><span class="mit" style="left:54px">Copy as path</span><span class="msc" style="left:307px">Ctrl+Shift+C</span></div>
<div class="mi" style="top:518px;height:38px;line-height:38px;font-size:17px"><span class="mic" style="left:19px"><svg width="22" height="22" viewBox="0 0 20 20" fill="none" stroke-linecap="round" stroke-linejoin="round" stroke-width="1.15" ><path d="M12.2 2.6 A4.4 4.4 0 0 0 9.2 8.6 L2.8 15 A1.6 1.6 0 0 0 5 17.2 L11.4 10.8 A4.4 4.4 0 0 0 17.4 7.8 L14.8 10 L11.6 8.4 L10.9 5.2 Z" stroke="#505050"/></svg></span><span class="mit" style="left:54px">Properties</span><span class="msc" style="left:307px">Alt+Enter</span></div>
<div class="mi" style="top:569px;height:38px;line-height:38px;font-size:17px"><span class="mic" style="left:19px"><svg width="22" height="22" viewBox="0 0 20 20" fill="none" stroke-linecap="round" stroke-linejoin="round" stroke-width="1.15" ><rect x="3" y="2.4" width="14" height="15.6" rx="1" fill="#3cbada" stroke="none"/><rect x="3" y="16.4" width="14" height="1.6" fill="#b5552a" stroke="none"/><path d="M5.2 1 V3.6 M8.4 1 V3.6 M11.6 1 V3.6 M14.8 1 V3.6" stroke="#1d5fa8" stroke-width="1.3" stroke-linecap="butt"/><path d="M5 6.4 H15 M5 8.8 H15 M5 11.2 H15 M5 13.6 H15" stroke="#1468a8" stroke-width="1.1" stroke-linecap="butt"/></svg></span><span class="mit" style="left:54px">Edit in Notepad</span></div>
<div class="mi" style="top:608px;height:38px;line-height:38px;font-size:17px"><span class="mic" style="left:19px"><svg width="22" height="22" viewBox="0 0 20 20" fill="none" stroke-linecap="round" stroke-linejoin="round" stroke-width="1.15" ><path d="M10.2 2 C5.2 2 1.6 5.6 1.8 10 C2 14.4 5.4 17.6 8.6 17.4 C10.4 17.3 10.2 15.4 9.6 14.4 C9 13.2 10 12 11.6 12.2 C15 12.6 18.4 11.4 18.2 8 C18 4.6 14.4 2 10.2 2 Z" fill="#4aa8e8" stroke="none"/><path d="M10.2 2 C6.5 2 3.6 4 2.4 6.8 L9 10 Z" fill="#58c27a" stroke="none"/><circle cx="6" cy="7" r="1.5" fill="#f2c94c" stroke="none"/><circle cx="10.2" cy="5" r="1.5" fill="#e85d4a" stroke="none"/><circle cx="14.4" cy="6.6" r="1.5" fill="#2458c8" stroke="none"/><circle cx="5.2" cy="11.6" r="1.5" fill="#2a3fae" stroke="none"/><path d="M15.4 9.6 L12.2 17.6 L13.8 18.4 L17 10.4 Z" fill="#b5652a" stroke="none"/><path d="M12.2 17.6 L11.6 19.6 L13.8 18.4 Z" fill="#3a3a3a" stroke="none"/></svg></span><span class="mit" style="left:54px">Edit with Paint</span></div>
<div class="mi" style="top:648px;height:38px;line-height:38px;font-size:17px"><span class="mic" style="left:19px"><svg width="22" height="22" viewBox="0 0 20 20" fill="none" stroke-linecap="round" stroke-linejoin="round" stroke-width="1.15" ><defs><linearGradient id="pg31" x1="0" y1="0" x2="1" y2="1"><stop offset="0" stop-color="#1a4fc4"/><stop offset="1" stop-color="#2a7be8"/></linearGradient></defs><rect x="2" y="2" width="16" height="16" rx="2.2" fill="url(#pg31)" stroke="none"/><path d="M2 16 L9.5 8 L13 12 L10 18 H4.2 A2.2 2.2 0 0 1 2 15.8 Z" fill="#4fc3f7" stroke="none"/><path d="M7 18 L13.6 10.5 L18 15 V15.8 A2.2 2.2 0 0 1 15.8 18 Z" fill="#2196f3" stroke="none"/><circle cx="14.2" cy="5.6" r="1.3" fill="#fff" stroke="none"/></svg></span><span class="mit" style="left:54px">Photos</span><span class="mch" style="left:376px"><svg width="16" height="16" viewBox="0 0 20 20" fill="none" stroke-linecap="round" stroke-linejoin="round" stroke-width="1.15" ><path d="M7.5 4.5 L13 10 L7.5 15.5" stroke="#5a5a5a" stroke-width="1.2"/></svg></span></div>
<div class="mi" style="top:700px;height:38px;line-height:38px;font-size:17px"><span class="mic" style="left:19px"><svg width="22" height="22" viewBox="0 0 20 20" fill="none" stroke-linecap="round" stroke-linejoin="round" stroke-width="1.15" ><path d="M9 3 H5 A2.2 2.2 0 0 0 2.8 5.2 V15 A2.2 2.2 0 0 0 5 17.2 H14.8 A2.2 2.2 0 0 0 17 15 V11" stroke="#505050"/><path d="M2.8 11.2 H6.6 A2.2 2.2 0 0 1 8.8 13.4 V17.2" stroke="#505050"/><path d="M11.6 2.8 H17.2 V8.4 M17 3 L11.2 8.8" stroke="#1a80d6"/></svg></span><span class="mit" style="left:54px">Show more options</span></div>
<i class="hsep" style="top:560.5px;left:8px;right:0"></i><i class="hsep" style="top:692px;left:8px;right:0"></i>
</div>
<div class="pill" style="left:13px;top:13px;width:106px">Before</div>
</div>
<div class="panel" style="left:960px">
<div class="wall"><svg width="960" height="960" viewBox="0 0 960 960">
<defs><linearGradient id="bgb" x1="0" y1="0" x2="1" y2="0"><stop offset="0" stop-color="#b3cadf"/><stop offset="0.3" stop-color="#aec7dd"/><stop offset="0.8" stop-color="#a3bfd8"/><stop offset="1" stop-color="#a7c2da"/></linearGradient><linearGradient id="bgvb" x1="0" y1="0" x2="0" y2="1"><stop offset="0" stop-color="#a3bfd8" stop-opacity="0"/><stop offset=".45" stop-color="#b6d0e5" stop-opacity=".9"/><stop offset="1" stop-color="#b4cce4"/></linearGradient><linearGradient id="domeb" x1="258" y1="0" x2="795" y2="0" gradientUnits="userSpaceOnUse"><stop offset="0" stop-color="#34a6f6"/><stop offset="0.3" stop-color="#2288ee"/><stop offset="0.6" stop-color="#1f6ee6"/><stop offset="0.82" stop-color="#1c58de"/><stop offset="0.93" stop-color="#1546d4"/><stop offset="1" stop-color="#1a3cba"/></linearGradient><linearGradient id="lbb" x1="0" y1="470" x2="0" y2="960" gradientUnits="userSpaceOnUse"><stop offset="0" stop-color="#1346c8"/><stop offset="0.14" stop-color="#1444c6"/><stop offset="0.4" stop-color="#123cbc"/><stop offset="0.55" stop-color="#184acc"/><stop offset="1" stop-color="#1a50d2"/></linearGradient><linearGradient id="drkb" x1="848" y1="0" x2="965" y2="0" gradientUnits="userSpaceOnUse"><stop offset="0" stop-color="#07165a"/><stop offset="0.3" stop-color="#0a2282"/><stop offset="0.6" stop-color="#1238b0"/><stop offset="0.85" stop-color="#1a4ccc"/><stop offset="1" stop-color="#1e54d4"/></linearGradient><linearGradient id="shdb" x1="752" y1="876" x2="828" y2="913" gradientUnits="userSpaceOnUse"><stop offset="0" stop-color="#1a4cd0"/><stop offset="0.3" stop-color="#0a1f78"/><stop offset="0.45" stop-color="#07134f"/><stop offset="0.62" stop-color="#081a66"/><stop offset="1" stop-color="#1648cc"/></linearGradient><linearGradient id="lipb" x1="826" y1="890" x2="890" y2="905" gradientUnits="userSpaceOnUse"><stop offset="0" stop-color="#1648cc"/><stop offset="0.4" stop-color="#1c5ae2"/><stop offset="1" stop-color="#1a50d6"/></linearGradient><radialGradient id="petb" cx="785" cy="790" r="95" gradientUnits="userSpaceOnUse"><stop offset="0" stop-color="#2182f6"/><stop offset="0.55" stop-color="#1c66e8"/><stop offset="1" stop-color="#1850d6"/></radialGradient><linearGradient id="botb" x1="0" y1="0" x2="760" y2="0" gradientUnits="userSpaceOnUse"><stop offset="0" stop-color="#0e3cc0"/><stop offset="0.09" stop-color="#1a5ce0"/><stop offset="0.13" stop-color="#1c5ee2"/><stop offset="0.22" stop-color="#1446d0"/><stop offset="0.3" stop-color="#1a58e0"/><stop offset="0.37" stop-color="#1648d0"/><stop offset="0.43" stop-color="#1240c0"/><stop offset="0.52" stop-color="#0a2690"/><stop offset="0.59" stop-color="#050c3c"/><stop offset="0.65" stop-color="#07145a"/><stop offset="0.7" stop-color="#0e3cc0"/><stop offset="0.88" stop-color="#1a54dc"/><stop offset="0.95" stop-color="#1444c8"/><stop offset="0.985" stop-color="#0a1f78"/><stop offset="1" stop-color="#07134f"/></linearGradient></defs>
<rect width="960" height="960" fill="url(#bgb)"/>
<rect x="750" y="0" width="210" height="960" fill="url(#bgvb)"/>
<path d="M240 54 C262 36 286 14 322 -4 L634 -4 C658 8 678 22 691 36 C720 62 742 96 755 125 C776 165 785 210 784 252 C783 300 772 350 753 387 L600 387 L600 54 Z" fill="url(#domeb)"/>
<path d="M285 36 C345 2 440 -10 520 -8" stroke="#58b8fa" stroke-width="2.5" fill="none" opacity=".55"/>
<path d="M320 36 C395 6 480 0 560 4" stroke="#49a8f6" stroke-width="2" fill="none" opacity=".5"/>
<path d="M390 36 C460 12 560 6 640 20 C665 25 680 32 688 36 Z" fill="#1b62e2" opacity=".55"/>
<path d="M465 36 C520 22 580 20 635 36 Z" fill="#1a56da" opacity=".6"/>
<path d="M755 125 C776 165 785 210 784 252 C783 300 772 350 753 387" stroke="#1a3cb6" stroke-width="5" fill="none" opacity=".9"/>
<path d="M753 140 C770 175 777 215 776 252 C775 295 766 338 751 372" stroke="#2a62e6" stroke-width="3" fill="none" opacity=".8"/>
<path d="M745 480 L755 477 C780 471 810 470 840 478 C890 492 930 517 965 540 L965 884 L960 887 L876 962 L745 962 Z" fill="url(#lbb)"/>
<path d="M755 520 C790 500 840 498 880 512" stroke="#2a62e2" stroke-width="2" fill="none" opacity=".5"/>
<path d="M840 733 L965 733 L965 884 L876 962 L840 962 Z" fill="url(#drkb)"/>
<path d="M915 560 C935 600 950 640 965 655 L965 700 C940 690 925 650 912 600 Z" fill="#0f30a6" opacity=".5"/>
<path d="M740 845 C790 838 830 833 856 831 L846 872 C840 900 832 935 826 962 L740 962 Z" fill="url(#shdb)"/>
<path d="M855 831 C872 833 886 846 890 866 C888 892 870 922 848 962 L822 962 C834 925 842 884 846 840 Z" fill="url(#lipb)"/>
<path d="M750 730 L849 730 C858 760 865 792 860 816 C858 825 857 829 855 832 C830 833 790 838 750 846 Z" fill="url(#petb)"/>
<rect x="0" y="906" width="757" height="60" fill="url(#botb)"/>
<path d="M102 906 C116 920 128 942 134 965 L150 965 C142 940 130 920 116 906 Z" fill="#3a7cf0" opacity=".5"/>
<path d="M130 906 C142 920 152 942 158 965 L170 965 C164 940 154 920 142 906 Z" fill="#3a7cf0" opacity=".5"/>
<path d="M152 906 C164 920 174 942 180 965 L192 965 C186 940 176 920 164 906 Z" fill="#2f70ea" opacity=".45"/>
<path d="M238 906 C252 920 264 942 272 965 L286 965 C278 940 266 920 252 906 Z" fill="#3a7cf0" opacity=".5"/>
<path d="M262 906 C276 920 290 942 298 965 L312 965 C304 940 290 920 276 906 Z" fill="#2f70ea" opacity=".45"/>
<path d="M330 906 C380 918 420 938 445 965 L560 965 C540 940 520 920 500 906 Z" fill="#050c3c" opacity=".5"/>
<path d="M690 965 L742 938 L757 925 L757 965 Z" fill="#050e48" opacity=".85"/>
</svg></div>
<div class="win" style="left:-30px;top:34.5px;width:785px;height:877.5px">
<div class="title" style="height:46.5px"></div>
<div class="nav" style="top:46.5px;height:59px"><div class="box" style="left:41px;top:11px;width:447px;height:38px"></div><div class="box" style="left:498px;top:11px;width:273px;height:38px"></div></div>
<div class="tool" style="top:106.5px;height:55px"></div>
</div>
<i class="wc-min" style="left:607px;top:50px"></i><i class="wc-max" style="left:664px;top:45px"></i>
<span class="wc-x" style="left:719.2px;top:43.3px"><svg width="15.5" height="15.5" viewBox="0 0 14 14" fill="none" stroke-linecap="round" stroke-linejoin="round" stroke-width="1.15" ><path d='M2 2 L12 12 M12 2 L2 12' stroke='#222' stroke-width='1.2'/></svg></span>
<span class="abs" style="left:479px;top:101px"><svg width="20" height="20" viewBox="0 0 20 20" fill="none" stroke-linecap="round" stroke-linejoin="round" stroke-width="1.15" ><circle cx="8.4" cy="8.4" r="6.2" stroke="#2b2b2b" stroke-width="1.4"/><path d="M13 13 L18.4 18.4" stroke="#2b2b2b" stroke-width="1.4"/></svg></span>
<span class="t" style="left:515px;top:100.5px;font-size:16.5px;color:#666">Search Downloads</span>
<span class="abs" style="left:21px;top:160px"><svg width="21" height="21" viewBox="0 0 20 20" fill="none" stroke-linecap="round" stroke-linejoin="round" stroke-width="1.15" ><path d="M6 17 V3 M2.4 6.6 L6 3 L9.6 6.6" stroke="#505050"/><path d="M14 3 V17 M10.4 13.4 L14 17 L17.6 13.4" stroke="#1a80d6"/></svg></span><span class="t tb" style="left:51px;top:161px">Sort</span><span class="abs" style="left:83px;top:165px"><svg width="12" height="12" viewBox="0 0 20 20" fill="none" stroke-linecap="round" stroke-linejoin="round" stroke-width="1.15" ><path d="M5.5 8 L10 12.5 L14.5 8" stroke="#8a8a8a" stroke-width="1.6"/></svg></span>
<span class="abs" style="left:128px;top:160px"><svg width="19" height="19" viewBox="0 0 20 20" fill="none" stroke-linecap="round" stroke-linejoin="round" stroke-width="1.15" ><rect x="2" y="2.5" width="16" height="12.5" rx="2.2" stroke="#505050"/><path d="M5.5 17.8 H14.5" stroke="#505050"/></svg></span><span class="t tb" style="left:157px;top:161px">View</span><span class="abs" style="left:194px;top:165px"><svg width="12" height="12" viewBox="0 0 20 20" fill="none" stroke-linecap="round" stroke-linejoin="round" stroke-width="1.15" ><path d="M5.5 8 L10 12.5 L14.5 8" stroke="#8a8a8a" stroke-width="1.6"/></svg></span>
<i class="vsep2" style="left:224px;top:152px;height:36px"></i>
<span class="abs" style="left:246px;top:159px"><svg width="22" height="22" viewBox="0 0 20 20" fill="none" stroke-linecap="round" stroke-linejoin="round" stroke-width="1.15" ><path d="M11 5 H16 A2 2 0 0 1 18 7 V14 A2 2 0 0 1 16 16 H4 A2 2 0 0 1 2 14 V11.5 M2.2 13 H17.8" stroke="#505050"/><rect x="1.6" y="1.6" width="9" height="9" rx="1.4" fill="#1a80d6" stroke="none"/><path d="M2.6 10 L6 6.8 L9.6 10 Z" fill="#fff" stroke="none"/><circle cx="7.8" cy="4.2" r=".9" fill="#fff" stroke="none"/></svg></span><span class="t tb" style="left:276px;top:161px">Set as background</span>
<span class="abs" style="left:436px;top:160px"><svg width="20" height="20" viewBox="0 0 20 20" fill="none" stroke-linecap="round" stroke-linejoin="round" stroke-width="1.15" ><path d="M17.5 17.5 H2.5 V10.5 Z" stroke="#505050"/><path d="M10.5 10.2 C15.5 10 17 8 16.4 6 C15.8 4.2 13 3.6 9 3.6 H3.6 M6.2 1 L3.4 3.6 L6.2 6.2" stroke="#1a80d6"/></svg></span><span class="t tb" style="left:465px;top:161px">Rotate left</span>
<span class="dots" style="left:570px;top:168px"><i></i><i></i><i></i></span>
<span class="abs" style="left:653px;top:160px"><svg width="21" height="21" viewBox="0 0 20 20" fill="none" stroke-linecap="round" stroke-linejoin="round" stroke-width="1.15" ><path d="M11.6 3.4 H16.4 A2.2 2.2 0 0 1 18.6 5.6 V14.4 A2.2 2.2 0 0 1 16.4 16.6 H11.6 Z" fill="#d4e9f9" stroke="none"/><rect x="1.4" y="3.4" width="17.2" height="13.2" rx="2.2" stroke="#505050"/><path d="M11.6 3.4 V16.6" stroke="#505050"/><path d="M13.8 7 H16.4 M13.8 10 H16.4 M13.8 13 H16.4" stroke="#1a80d6"/><path d="M11.6 3.4 H16.4 A2.2 2.2 0 0 1 18.6 5.6 V14.4 A2.2 2.2 0 0 1 16.4 16.6 H11.6" stroke="#1a80d6"/></svg></span><span class="t tb" style="left:683px;top:161px">Details</span>
<div class="tile" style="left:49px;top:239px;width:221.5px;height:233px"><i class="cb"></i>
<div class="thumb" style="left:34px;top:5px;width:148px;height:196px"><svg width="100%" height="100%" viewBox="0 0 148 196" preserveAspectRatio="none">
<defs>
<linearGradient id="seab" x1="0" y1="47" x2="0" y2="196" gradientUnits="userSpaceOnUse"><stop offset="0" stop-color="#437cb6"/><stop offset=".12" stop-color="#2f6caa"/><stop offset=".35" stop-color="#2562a2"/><stop offset=".6" stop-color="#1d528e"/><stop offset="1" stop-color="#225892"/></linearGradient>
<linearGradient id="skyb" x1="0" y1="0" x2="0" y2="47" gradientUnits="userSpaceOnUse"><stop offset="0" stop-color="#dfe7f0"/><stop offset=".5" stop-color="#eef2f6"/><stop offset="1" stop-color="#d6dde6"/></linearGradient>
<filter id="wdb" color-interpolation-filters="sRGB" x="0" y="0" width="100%" height="100%"><feTurbulence type="fractalNoise" baseFrequency="0.03 0.1" numOctaves="3" seed="4"/><feColorMatrix type="matrix" values="0 0 0 0 0.05  0 0 0 0 0.2  0 0 0 0 0.4  3 0 0 0 -1.36"/></filter>
<filter id="wlb" color-interpolation-filters="sRGB" x="0" y="0" width="100%" height="100%"><feTurbulence type="fractalNoise" baseFrequency="0.04 0.16" numOctaves="3" seed="11"/><feColorMatrix type="matrix" values="0 0 0 0 0.36  0 0 0 0 0.6  0 0 0 0 0.82  3 0 0 0 -1.5"/></filter>
<filter id="blb" x="-5%" y="-5%" width="110%" height="110%"><feGaussianBlur stdDeviation=".7"/></filter>
<filter id="bl2b" x="-5%" y="-5%" width="110%" height="110%"><feGaussianBlur stdDeviation="1.6"/></filter>
</defs>
<rect width="148" height="196" fill="url(#seab)"/>
<rect width="148" height="48" fill="url(#skyb)"/>
<g filter="url(#bl2b)">
<path d="M-2 -2 H44 C40 4 30 8 20 7 C10 9 4 12 -2 13 Z" fill="#86b8ea"/>
<ellipse cx="30" cy="22" rx="26" ry="7" fill="#c9d2dc" opacity=".5"/>
<ellipse cx="95" cy="8" rx="40" ry="6" fill="#f6f8fa"/>
<ellipse cx="110" cy="26" rx="36" ry="6" fill="#c9d0d9" opacity=".55"/>
<ellipse cx="60" cy="14" rx="22" ry="6" fill="#fafbfc"/>
<ellipse cx="20" cy="34" rx="24" ry="5" fill="#f2f5f8"/>
</g>
<g filter="url(#blb)">
<rect x="-1" y="40.5" width="150" height="6.5" fill="#7f8c86"/>
<rect x="30" y="39" width="110" height="4" fill="#aeb6bd"/>
<rect x="66" y="28" width="8.5" height="13" fill="#60728e"/><rect x="78" y="31" width="3.5" height="10" fill="#74849c"/><rect x="86.5" y="31" width="3.5" height="10" fill="#6b7c96"/><rect x="92" y="33" width="13" height="8" fill="#8d9bb0"/><rect x="108" y="33" width="5" height="8" fill="#9aa7b8"/><rect x="115" y="33.5" width="14" height="7.5" fill="#a9b3c2"/><rect x="133" y="30" width="12" height="11" fill="#8492a8"/>
<rect x="-1" y="46.2" width="150" height="1.8" fill="#4a6a94"/>
<rect x="0" y="48" width="148" height="148" filter="url(#wdb)"/><rect x="0" y="48" width="148" height="148" filter="url(#wlb)"/>
<path d="M93 52 L96 48.5 H124 L128 50.5 L126 54.5 H96 Z" fill="#d9dde3"/><rect x="103" y="45.5" width="8" height="3.5" fill="#3a4452"/>
<path d="M50 130 C50 116 60 108 74 106" stroke="#c8cc2a" stroke-width="1.6" fill="none"/>
<path d="M62 122 C66 112 74 108 86 108 C96 109 104 118 108 132 C112 146 112 158 108 168 L66 170 C60 160 58 140 62 122 Z" fill="#17181a"/>
<path d="M64 128 C52 134 42 140 31 143 L30 150 C44 150 58 146 68 140 Z" fill="#17181a"/>
<rect x="75" y="96" width="19" height="10" rx="5" fill="#1c1c1c"/>
<ellipse cx="85" cy="112" rx="8" ry="7.5" fill="#b08868"/>
<rect x="75.5" y="101.5" width="18.5" height="12.5" rx="4.5" fill="#e6cf1c"/><rect x="79" y="104.5" width="11.5" height="5" rx="2" fill="#f0e26a"/>
<path d="M68 130 L72 128 L73 158 L69 160 Z M75 127 L79 126 L79 157 L75 158 Z M82 126 L86 127 L84 156 L81 156 Z" fill="#dcc21e"/>
<ellipse cx="88" cy="153" rx="5" ry="4" fill="#9a7458"/>
<rect x="19.5" y="126" width="7.5" height="44" rx="3" fill="#141516"/>
<path d="M27 150 C33 156 40 164 43 172 C40 177 34 176 30 172 Z" fill="#d4bc1c"/>
<path d="M0 196 L8 172 C12 168 20 168 22 172 L24 196 Z" fill="#9ba1a9"/>
<path d="M22 196 L24 178 L100 170 L104 196 Z" fill="#c4c8ce"/>
<path d="M26 182 L98 173 L99 179 L27 188 Z" fill="#555b63"/>
<path d="M96 196 C96 180 100 166 104 158 C112 164 120 180 124 196 Z" fill="#8e949c"/>
<path d="M120 196 C118 182 114 170 112 162 C120 160 132 176 140 196 Z" fill="#6a7078"/>
<path d="M132 196 L140 186 L148 184 V196 Z" fill="#d0d4d9"/>
<rect x="21" y="170" width="1.4" height="26" fill="#d8dade"/><rect x="29" y="160" width="1.2" height="36" fill="#caced4"/>
</g>
</svg></div>
<span class="t" style="left:78px;top:210px;font-size:13.5px;color:#222">DSCF0557</span></div>
<div class="palm" style="left:318px;top:244.5px;width:148px;height:60px"><svg width="148" height="60" viewBox="0 0 148 60">
<defs><filter id="pbl" x="-5%" y="-5%" width="110%" height="110%"><feGaussianBlur stdDeviation=".85"/></filter></defs>
<rect width="148" height="60" fill="#eef2f4"/>
<g filter="url(#pbl)" stroke-linecap="round">
<path d="M0 0 H44 L52 4 L50 12 L44 18 L52 22 L46 26 L36 24 L28 28 L20 22 L10 28 L0 24 Z" fill="#121516"/>
<path d="M0 24 L10 26 L22 38 L34 52 L40 60 H0 Z" fill="#14181a"/>
<path d="M10 40 L0 46 M12 44 L2 52 M18 48 L10 58" stroke="#182022" stroke-width="2.4"/>
<rect x="30" y="20" width="2.2" height="34" fill="#15181a" transform="rotate(-3 31 37)"/>
<rect x="40" y="24" width="2" height="30" fill="#15181a" transform="rotate(-6 41 39)"/>
<path d="M31 20 Q23.3 19.5 18.2 24.9" stroke="#15181a" stroke-width="2.4" fill="none"/><path d="M31 20 Q23.6 16.6 18.7 20.1" stroke="#15181a" stroke-width="2.4" fill="none"/><path d="M31 20 Q25.7 14.2 22.2 16.1" stroke="#15181a" stroke-width="2.4" fill="none"/><path d="M31 20 Q29.1 12.8 27.8 13.8" stroke="#15181a" stroke-width="2.4" fill="none"/><path d="M31 20 Q32.9 12.8 34.2 13.8" stroke="#15181a" stroke-width="2.4" fill="none"/><path d="M31 20 Q36.3 14.2 39.8 16.1" stroke="#15181a" stroke-width="2.4" fill="none"/><path d="M31 20 Q38.4 16.6 43.3 20.1" stroke="#15181a" stroke-width="2.4" fill="none"/><path d="M31 20 Q38.7 19.5 43.8 24.9" stroke="#15181a" stroke-width="2.4" fill="none"/>
<path d="M42 26 Q35.5 25.5 31.2 30.2" stroke="#5a6a1e" stroke-width="2" fill="none"/><path d="M42 26 Q35.9 22.7 31.9 25.5" stroke="#5a6a1e" stroke-width="2" fill="none"/><path d="M42 26 Q38.4 20.5 36.0 21.9" stroke="#5a6a1e" stroke-width="2" fill="none"/><path d="M42 26 Q42.0 19.7 42.0 20.5" stroke="#5a6a1e" stroke-width="2" fill="none"/><path d="M42 26 Q45.6 20.5 48.0 21.9" stroke="#5a6a1e" stroke-width="2" fill="none"/><path d="M42 26 Q48.1 22.7 52.1 25.5" stroke="#5a6a1e" stroke-width="2" fill="none"/><path d="M42 26 Q48.5 25.5 52.8 30.2" stroke="#5a6a1e" stroke-width="2" fill="none"/>
<path d="M60 14 Q52.9 13.5 48.2 18.6" stroke="#15181a" stroke-width="2.4" fill="none"/><path d="M60 14 Q53.2 10.8 48.6 14.1" stroke="#15181a" stroke-width="2.4" fill="none"/><path d="M60 14 Q55.1 8.6 51.8 10.4" stroke="#15181a" stroke-width="2.4" fill="none"/><path d="M60 14 Q58.2 7.3 57.0 8.3" stroke="#15181a" stroke-width="2.4" fill="none"/><path d="M60 14 Q61.8 7.3 63.0 8.3" stroke="#15181a" stroke-width="2.4" fill="none"/><path d="M60 14 Q64.9 8.6 68.2 10.4" stroke="#15181a" stroke-width="2.4" fill="none"/><path d="M60 14 Q66.8 10.8 71.4 14.1" stroke="#15181a" stroke-width="2.4" fill="none"/><path d="M60 14 Q67.1 13.5 71.8 18.6" stroke="#15181a" stroke-width="2.4" fill="none"/>
<rect x="59.5" y="12" width="2" height="24" fill="#15181a"/>
<path d="M78 16 Q69.7 15.4 64.2 21.3" stroke="#15181a" stroke-width="2.6" fill="none"/><path d="M78 16 Q69.9 12.7 64.5 16.8" stroke="#15181a" stroke-width="2.6" fill="none"/><path d="M78 16 Q71.6 10.3 67.3 12.8" stroke="#15181a" stroke-width="2.6" fill="none"/><path d="M78 16 Q74.5 8.6 72.1 10.0" stroke="#15181a" stroke-width="2.6" fill="none"/><path d="M78 16 Q78.0 8.0 78.0 9.0" stroke="#15181a" stroke-width="2.6" fill="none"/><path d="M78 16 Q81.5 8.6 83.9 10.0" stroke="#15181a" stroke-width="2.6" fill="none"/><path d="M78 16 Q84.4 10.3 88.7 12.8" stroke="#15181a" stroke-width="2.6" fill="none"/><path d="M78 16 Q86.1 12.7 91.5 16.8" stroke="#15181a" stroke-width="2.6" fill="none"/><path d="M78 16 Q86.3 15.4 91.8 21.3" stroke="#15181a" stroke-width="2.6" fill="none"/>
<rect x="77" y="14" width="2.4" height="22" fill="#15181a"/>
<path d="M96 3 Q88.3 2.5 83.2 7.9" stroke="#15181a" stroke-width="2.6" fill="none"/><path d="M96 3 Q88.5 -0.1 83.4 3.7" stroke="#15181a" stroke-width="2.6" fill="none"/><path d="M96 3 Q90.0 -2.3 86.0 -0.0" stroke="#15181a" stroke-width="2.6" fill="none"/><path d="M96 3 Q92.7 -3.9 90.5 -2.6" stroke="#15181a" stroke-width="2.6" fill="none"/><path d="M96 3 Q96.0 -4.4 96.0 -3.5" stroke="#15181a" stroke-width="2.6" fill="none"/><path d="M96 3 Q99.3 -3.9 101.5 -2.6" stroke="#15181a" stroke-width="2.6" fill="none"/><path d="M96 3 Q102.0 -2.3 106.0 -0.0" stroke="#15181a" stroke-width="2.6" fill="none"/><path d="M96 3 Q103.5 -0.1 108.6 3.7" stroke="#15181a" stroke-width="2.6" fill="none"/><path d="M96 3 Q103.7 2.5 108.8 7.9" stroke="#15181a" stroke-width="2.6" fill="none"/>
<rect x="95" y="2" width="2.2" height="32" fill="#15181a"/>
<path d="M113 -2 Q105.9 -2.5 101.2 2.6" stroke="#15181a" stroke-width="2.6" fill="none"/><path d="M113 -2 Q106.2 -5.2 101.6 -1.9" stroke="#15181a" stroke-width="2.6" fill="none"/><path d="M113 -2 Q108.1 -7.4 104.8 -5.6" stroke="#15181a" stroke-width="2.6" fill="none"/><path d="M113 -2 Q111.2 -8.7 110.0 -7.7" stroke="#15181a" stroke-width="2.6" fill="none"/><path d="M113 -2 Q114.8 -8.7 116.0 -7.7" stroke="#15181a" stroke-width="2.6" fill="none"/><path d="M113 -2 Q117.9 -7.4 121.2 -5.6" stroke="#15181a" stroke-width="2.6" fill="none"/><path d="M113 -2 Q119.8 -5.2 124.4 -1.9" stroke="#15181a" stroke-width="2.6" fill="none"/><path d="M113 -2 Q120.1 -2.5 124.8 2.6" stroke="#15181a" stroke-width="2.6" fill="none"/>
<rect x="112" y="-2" width="2.4" height="36" fill="#15181a"/>
<path d="M134 10 Q125.1 9.4 119.2 15.7" stroke="#15181a" stroke-width="2.8" fill="none"/><path d="M134 10 Q125.2 6.8 119.3 11.4" stroke="#15181a" stroke-width="2.8" fill="none"/><path d="M134 10 Q126.6 4.4 121.6 7.4" stroke="#15181a" stroke-width="2.8" fill="none"/><path d="M134 10 Q129.1 2.6 125.8 4.4" stroke="#15181a" stroke-width="2.8" fill="none"/><path d="M134 10 Q132.3 1.6 131.1 2.7" stroke="#15181a" stroke-width="2.8" fill="none"/><path d="M134 10 Q135.7 1.6 136.9 2.7" stroke="#15181a" stroke-width="2.8" fill="none"/><path d="M134 10 Q138.9 2.6 142.2 4.4" stroke="#15181a" stroke-width="2.8" fill="none"/><path d="M134 10 Q141.4 4.4 146.4 7.4" stroke="#15181a" stroke-width="2.8" fill="none"/><path d="M134 10 Q142.8 6.8 148.7 11.4" stroke="#15181a" stroke-width="2.8" fill="none"/><path d="M134 10 Q142.9 9.4 148.8 15.7" stroke="#15181a" stroke-width="2.8" fill="none"/>
<path d="M146 4 Q138.9 3.5 134.2 8.6" stroke="#15181a" stroke-width="2.6" fill="none"/><path d="M146 4 Q139.2 0.8 134.6 4.1" stroke="#15181a" stroke-width="2.6" fill="none"/><path d="M146 4 Q141.1 -1.4 137.8 0.4" stroke="#15181a" stroke-width="2.6" fill="none"/><path d="M146 4 Q144.2 -2.7 143.0 -1.7" stroke="#15181a" stroke-width="2.6" fill="none"/><path d="M146 4 Q147.8 -2.7 149.0 -1.7" stroke="#15181a" stroke-width="2.6" fill="none"/><path d="M146 4 Q150.9 -1.4 154.2 0.4" stroke="#15181a" stroke-width="2.6" fill="none"/><path d="M146 4 Q152.8 0.8 157.4 4.1" stroke="#15181a" stroke-width="2.6" fill="none"/><path d="M146 4 Q153.1 3.5 157.8 8.6" stroke="#15181a" stroke-width="2.6" fill="none"/>
<path d="M70 6 Q64.1 5.6 60.2 9.8" stroke="#15181a" stroke-width="2.2" fill="none"/><path d="M70 6 Q64.5 3.0 60.8 5.5" stroke="#15181a" stroke-width="2.2" fill="none"/><path d="M70 6 Q66.7 1.0 64.5 2.2" stroke="#15181a" stroke-width="2.2" fill="none"/><path d="M70 6 Q70.0 0.3 70.0 1.0" stroke="#15181a" stroke-width="2.2" fill="none"/><path d="M70 6 Q73.3 1.0 75.5 2.2" stroke="#15181a" stroke-width="2.2" fill="none"/><path d="M70 6 Q75.5 3.0 79.2 5.5" stroke="#15181a" stroke-width="2.2" fill="none"/><path d="M70 6 Q75.9 5.6 79.8 9.8" stroke="#15181a" stroke-width="2.2" fill="none"/>
<path d="M50 10 Q44.7 9.6 41.1 13.4" stroke="#15181a" stroke-width="2.2" fill="none"/><path d="M50 10 Q45.0 7.3 41.7 9.6" stroke="#15181a" stroke-width="2.2" fill="none"/><path d="M50 10 Q47.0 5.5 45.1 6.6" stroke="#15181a" stroke-width="2.2" fill="none"/><path d="M50 10 Q50.0 4.9 50.0 5.5" stroke="#15181a" stroke-width="2.2" fill="none"/><path d="M50 10 Q53.0 5.5 54.9 6.6" stroke="#15181a" stroke-width="2.2" fill="none"/><path d="M50 10 Q55.0 7.3 58.3 9.6" stroke="#15181a" stroke-width="2.2" fill="none"/><path d="M50 10 Q55.3 9.6 58.9 13.4" stroke="#15181a" stroke-width="2.2" fill="none"/>
<path d="M104 16 Q97.5 15.5 93.2 20.2" stroke="#15181a" stroke-width="2.4" fill="none"/><path d="M104 16 Q97.7 13.1 93.6 16.1" stroke="#15181a" stroke-width="2.4" fill="none"/><path d="M104 16 Q99.5 11.1 96.5 12.7" stroke="#15181a" stroke-width="2.4" fill="none"/><path d="M104 16 Q102.4 9.9 101.3 10.8" stroke="#15181a" stroke-width="2.4" fill="none"/><path d="M104 16 Q105.6 9.9 106.7 10.8" stroke="#15181a" stroke-width="2.4" fill="none"/><path d="M104 16 Q108.5 11.1 111.5 12.7" stroke="#15181a" stroke-width="2.4" fill="none"/><path d="M104 16 Q110.3 13.1 114.4 16.1" stroke="#15181a" stroke-width="2.4" fill="none"/><path d="M104 16 Q110.5 15.5 114.8 20.2" stroke="#15181a" stroke-width="2.4" fill="none"/>
<path d="M122 14 Q116.1 13.6 112.2 17.8" stroke="#15181a" stroke-width="2.2" fill="none"/><path d="M122 14 Q116.5 11.0 112.8 13.5" stroke="#15181a" stroke-width="2.2" fill="none"/><path d="M122 14 Q118.7 9.0 116.5 10.2" stroke="#15181a" stroke-width="2.2" fill="none"/><path d="M122 14 Q122.0 8.3 122.0 9.0" stroke="#15181a" stroke-width="2.2" fill="none"/><path d="M122 14 Q125.3 9.0 127.5 10.2" stroke="#15181a" stroke-width="2.2" fill="none"/><path d="M122 14 Q127.5 11.0 131.2 13.5" stroke="#15181a" stroke-width="2.2" fill="none"/><path d="M122 14 Q127.9 13.6 131.8 17.8" stroke="#15181a" stroke-width="2.2" fill="none"/>
<path d="M130 22 Q122.9 21.5 118.2 26.6" stroke="#1a2218" stroke-width="2.4" fill="none"/><path d="M130 22 Q123.2 18.8 118.6 22.1" stroke="#1a2218" stroke-width="2.4" fill="none"/><path d="M130 22 Q125.1 16.6 121.8 18.4" stroke="#1a2218" stroke-width="2.4" fill="none"/><path d="M130 22 Q128.2 15.3 127.0 16.3" stroke="#1a2218" stroke-width="2.4" fill="none"/><path d="M130 22 Q131.8 15.3 133.0 16.3" stroke="#1a2218" stroke-width="2.4" fill="none"/><path d="M130 22 Q134.9 16.6 138.2 18.4" stroke="#1a2218" stroke-width="2.4" fill="none"/><path d="M130 22 Q136.8 18.8 141.4 22.1" stroke="#1a2218" stroke-width="2.4" fill="none"/><path d="M130 22 Q137.1 21.5 141.8 26.6" stroke="#1a2218" stroke-width="2.4" fill="none"/>
<path d="M44 60 L50 46 L62 38 L80 34 L100 32 L120 31 L148 30 V60 Z" fill="#1c1414"/>
<path d="M36 60 L44 50 L56 44 L70 46 L60 60 Z" fill="#15181a"/>
<ellipse cx="118" cy="46" rx="2.6" ry="3" fill="#8a1238"/>
<path d="M58 50 L62 48 M66 52 L72 49 M80 50 L86 47 M92 48 L97 46" stroke="#d8dcdc" stroke-width="1.3" opacity=".7"/>
</g></svg></div>
<span class="abs" style="left:692px;top:887px"><svg width="18" height="18" viewBox="0 0 20 20" fill="none" stroke-linecap="round" stroke-linejoin="round" stroke-width="1.15" ><path d="M1.5 3 H18.5 M1.5 7.7 H18.5 M1.5 12.3 H18.5 M1.5 17 H18.5" stroke="#7c7c7c" stroke-width="1.2" stroke-linecap="butt"/></svg></span><span class="abs" style="left:724px;top:887px"><svg width="17" height="17" viewBox="0 0 20 20" fill="none" stroke-linecap="round" stroke-linejoin="round" stroke-width="1.15" ><rect x="2.4" y="2.4" width="15.2" height="12.8" stroke="#7a7a7a" stroke-width="1.3"/><path d="M2.4 18 H17.6" stroke="#999" stroke-width="1.3"/></svg></span>
<div class="menu" style="left:227px;top:297px;width:397px;height:577px"><div class="glowR"></div>
<span class="tbi" style="left:29.5px;top:14.5px"><svg width="22" height="22" viewBox="0 0 20 20" fill="none" stroke-linecap="round" stroke-linejoin="round" stroke-width="1.15" ><path d="M5.2 1.5 L13.2 13.4 M14.8 1.5 L6.8 13.4" stroke="#505050"/><circle cx="5.6" cy="15.6" r="2.4" stroke="#1a80d6"/><circle cx="14.4" cy="15.6" r="2.4" stroke="#1a80d6"/></svg></span><span class="tbl" style="left:0.5px;top:43px">Cut</span><span class="tbi" style="left:108.5px;top:14.5px"><svg width="22" height="22" viewBox="0 0 20 20" fill="none" stroke-linecap="round" stroke-linejoin="round" stroke-width="1.15" ><path d="M6.5 6 H5.2 A2 2 0 0 0 3.2 8 V15.5 A2 2 0 0 0 5.2 17.5 H10.8 A2 2 0 0 0 12.8 15.5 V14.5" stroke="#505050"/><rect x="7.2" y="2.5" width="9.6" height="11.6" rx="2.2" stroke="#1a80d6"/></svg></span><span class="tbl" style="left:79.5px;top:43px">Copy</span><span class="tbi" style="left:188px;top:14.5px"><svg width="22" height="22" viewBox="0 0 20 20" fill="none" stroke-linecap="round" stroke-linejoin="round" stroke-width="1.15" ><path d="M11.2 4.5 H4 A2 2 0 0 0 2 6.5 V13.5 A2 2 0 0 0 4 15.5 H11.2 M15.8 4.5 H16.4 A2 2 0 0 1 18.4 6.5 V13.5 A2 2 0 0 1 16.4 15.5 H15.8" stroke="#505050"/><path d="M5 13 L7.6 6.8 L10.2 13 M5.9 11 H9.3" stroke="#1a80d6"/><path d="M13.5 1.8 V18.2 M11.8 1.8 H15.2 M11.8 18.2 H15.2" stroke="#1a80d6"/></svg></span><span class="tbl" style="left:159px;top:43px">Rename</span><span class="tbi" style="left:267px;top:14.5px"><svg width="22" height="22" viewBox="0 0 20 20" fill="none" stroke-linecap="round" stroke-linejoin="round" stroke-width="1.15" ><path d="M8.5 4 H5.5 A2.5 2.5 0 0 0 3 6.5 V14.5 A2.5 2.5 0 0 0 5.5 17 H13.5 A2.5 2.5 0 0 0 16 14.5 V13.5" stroke="#505050"/><path d="M12.3 2.2 L18 7 L12.3 11.8 V9 C9.5 8.8 7.6 10 6.3 12.6 C6.5 8.4 8.6 5.6 12.3 5.2 Z" stroke="#1a80d6"/></svg></span><span class="tbl" style="left:238px;top:43px">Share</span><span class="tbi" style="left:346px;top:14.5px"><svg width="22" height="22" viewBox="0 0 20 20" fill="none" stroke-linecap="round" stroke-linejoin="round" stroke-width="1.15" ><path d="M3 4.8 H17 M7.8 4.6 V3.8 A2.2 2.2 0 0 1 12.2 3.8 V4.6 M4.6 5 L5.7 16 A2 2 0 0 0 7.7 17.8 H12.3 A2 2 0 0 0 14.3 16 L15.4 5 M8.6 8.5 V14 M11.4 8.5 V14" stroke="#505050"/></svg></span><span class="tbl" style="left:317px;top:43px">Delete</span><i class="vsep" style="left:81px;top:14px;height:46px"></i><i class="vsep" style="left:159.5px;top:14px;height:46px"></i><i class="vsep" style="left:239px;top:14px;height:46px"></i><i class="vsep" style="left:318px;top:14px;height:46px"></i>
<i class="hsep" style="top:72px;left:0;right:0"></i>
<i class="hl" style="left:8px;top:233px;width:383px;height:35px"></i>
<div class="mi" style="top:78px;height:38px;line-height:38px;font-size:16.6px"><span class="mic" style="left:18px"><svg width="22" height="22" viewBox="0 0 20 20" fill="none" stroke-linecap="round" stroke-linejoin="round" stroke-width="1.15" ><defs><linearGradient id="pg48" x1="0" y1="0" x2="1" y2="1"><stop offset="0" stop-color="#1a4fc4"/><stop offset="1" stop-color="#2a7be8"/></linearGradient></defs><rect x="2" y="2" width="16" height="16" rx="2.2" fill="url(#pg48)" stroke="none"/><path d="M2 16 L9.5 8 L13 12 L10 18 H4.2 A2.2 2.2 0 0 1 2 15.8 Z" fill="#4fc3f7" stroke="none"/><path d="M7 18 L13.6 10.5 L18 15 V15.8 A2.2 2.2 0 0 1 15.8 18 Z" fill="#2196f3" stroke="none"/><circle cx="14.2" cy="5.6" r="1.3" fill="#fff" stroke="none"/></svg></span><span class="mit" style="left:52.5px">Open</span><span class="msc" style="left:318px;letter-spacing:-.1px">Enter</span></div>
<div class="mi" style="top:117px;height:38px;line-height:38px;font-size:16.6px"><span class="mic" style="left:18px"><svg width="22" height="22" viewBox="0 0 20 20" fill="none" stroke-linecap="round" stroke-linejoin="round" stroke-width="1.15" ><rect x="2.4" y="2.6" width="2.8" height="2.8" rx=".6" stroke="#505050"/><rect x="2.4" y="8.1" width="2.8" height="2.8" rx=".6" stroke="#505050"/><rect x="2.4" y="13.6" width="2.8" height="2.8" rx=".6" stroke="#505050"/><path d="M7.8 4 H17" stroke="#505050"/><circle cx="13" cy="13" r="5" fill="#1a80d6" stroke="none"/><path d="M11.2 14.8 L14.6 11.4 M12 11.2 H14.8 V14" stroke="#fff" stroke-width="1.2"/></svg></span><span class="mit" style="left:52.5px">Open with</span><span class="mch" style="left:365px"><svg width="16" height="16" viewBox="0 0 20 20" fill="none" stroke-linecap="round" stroke-linejoin="round" stroke-width="1.15" ><path d="M7.5 4.5 L13 10 L7.5 15.5" stroke="#5a5a5a" stroke-width="1.2"/></svg></span></div>
<div class="mi" style="top:156px;height:38px;line-height:38px;font-size:16.6px"><span class="mic" style="left:18px"><svg width="22" height="22" viewBox="0 0 20 20" fill="none" stroke-linecap="round" stroke-linejoin="round" stroke-width="1.15" ><path d="M11 1.8 C11.5 5 12.4 6.2 15.8 6.9 C12.4 7.6 11.5 8.8 11 12 C10.5 8.8 9.6 7.6 6.2 6.9 C9.6 6.2 10.5 5 11 1.8 Z" fill="#1a80d6" stroke="#1a80d6" stroke-width=".6"/><path d="M16 10.6 C16.3 12.4 16.8 13 18.6 13.4 C16.8 13.8 16.3 14.4 16 16.2 C15.7 14.4 15.2 13.8 13.4 13.4 C15.2 13 15.7 12.4 16 10.6 Z" fill="#1a80d6" stroke="#1a80d6" stroke-width=".4"/><path d="M2 14.2 L6.2 10 M3.2 17 L8.6 11.6 M6.6 17.6 L10.4 13.8" stroke="#505050"/></svg></span><span class="mit" style="left:52.5px">AI actions</span><span class="mch" style="left:365px"><svg width="16" height="16" viewBox="0 0 20 20" fill="none" stroke-linecap="round" stroke-linejoin="round" stroke-width="1.15" ><path d="M7.5 4.5 L13 10 L7.5 15.5" stroke="#5a5a5a" stroke-width="1.2"/></svg></span></div>
<div class="mi" style="top:194px;height:38px;line-height:38px;font-size:16.6px"><span class="mic" style="left:18px"><svg width="22" height="22" viewBox="0 0 20 20" fill="none" stroke-linecap="round" stroke-linejoin="round" stroke-width="1.15" ><path d="M8.5 4 H5.5 A2.5 2.5 0 0 0 3 6.5 V14.5 A2.5 2.5 0 0 0 5.5 17 H13.5 A2.5 2.5 0 0 0 16 14.5 V13.5" stroke="#505050"/><path d="M12.3 2.2 L18 7 L12.3 11.8 V9 C9.5 8.8 7.6 10 6.3 12.6 C6.5 8.4 8.6 5.6 12.3 5.2 Z" stroke="#1a80d6"/></svg></span><span class="mit" style="left:52.5px">Share with</span><span class="mch" style="left:365px"><svg width="16" height="16" viewBox="0 0 20 20" fill="none" stroke-linecap="round" stroke-linejoin="round" stroke-width="1.15" ><path d="M7.5 4.5 L13 10 L7.5 15.5" stroke="#5a5a5a" stroke-width="1.2"/></svg></span></div>
<div class="mi" style="top:233px;height:38px;line-height:38px;font-size:16.6px"><span class="mic" style="left:18px"><svg width="22" height="22" viewBox="0 0 20 20" fill="none" stroke-linecap="round" stroke-linejoin="round" stroke-width="1.15" ><path d="M9.5 16.5 H4 A2 2 0 0 1 2 14.5 V5.5 A2 2 0 0 1 4 3.5 H7.2 L9 5.3 H16 A2 2 0 0 1 18 7.3 V9.4 M2 7.6 H7.4 L9 5.4" stroke="#505050"/><rect x="10.6" y="12.2" width="8.6" height="6.2" rx="1.2" fill="#1a80d6" stroke="none"/><path d="M13 12.2 V11.6 A1 1 0 0 1 14 10.6 H15.8 A1 1 0 0 1 16.8 11.6 V12.2" stroke="#1a80d6" stroke-width="1.1"/><path d="M10.6 15 H19.2" stroke="#fff" stroke-width=".8"/></svg></span><span class="mit" style="left:52.5px">Manage file</span><span class="mch" style="left:365px"><svg width="16" height="16" viewBox="0 0 20 20" fill="none" stroke-linecap="round" stroke-linejoin="round" stroke-width="1.15" ><path d="M7.5 4.5 L13 10 L7.5 15.5" stroke="#5a5a5a" stroke-width="1.2"/></svg></span></div>
<div class="mi" style="top:272px;height:38px;line-height:38px;font-size:16.6px"><span class="mic" style="left:18px"><svg width="22" height="22" viewBox="0 0 20 20" fill="none" stroke-linecap="round" stroke-linejoin="round" stroke-width="1.15" ><path d="M10 1.8 L12.5 7 L18.2 7.8 L14.1 11.8 L15.1 17.5 L10 14.8 L4.9 17.5 L5.9 11.8 L1.8 7.8 L7.5 7 Z" stroke="#1a80d6"/></svg></span><span class="mit" style="left:52.5px">Add to Favorites</span></div>
<div class="mi" style="top:310px;height:38px;line-height:38px;font-size:16.6px"><span class="mic" style="left:18px"><svg width="22" height="22" viewBox="0 0 20 20" fill="none" stroke-linecap="round" stroke-linejoin="round" stroke-width="1.15" ><path d="M12.2 2.6 A4.4 4.4 0 0 0 9.2 8.6 L2.8 15 A1.6 1.6 0 0 0 5 17.2 L11.4 10.8 A4.4 4.4 0 0 0 17.4 7.8 L14.8 10 L11.6 8.4 L10.9 5.2 Z" stroke="#505050"/></svg></span><span class="mit" style="left:52.5px">Properties</span><span class="msc" style="left:318px">Alt+Enter</span></div>
<div class="mi" style="top:360px;height:38px;line-height:38px;font-size:16.6px"><span class="mic" style="left:18px"><svg width="22" height="22" viewBox="0 0 20 20" fill="none" stroke-linecap="round" stroke-linejoin="round" stroke-width="1.15" ><rect x="6" y="2.4" width="8" height="15.2" rx="1.8" stroke="#505050"/><path d="M8.9 15 H11.1" stroke="#505050"/></svg></span><span class="mit" style="left:52.5px">Send to My Phone</span></div>
<div class="mi" style="top:410px;height:38px;line-height:38px;font-size:16.6px"><span class="mic" style="left:18px"><svg width="22" height="22" viewBox="0 0 20 20" fill="none" stroke-linecap="round" stroke-linejoin="round" stroke-width="1.15" ><rect x="3" y="2.4" width="14" height="15.6" rx="1" fill="#3cbada" stroke="none"/><rect x="3" y="16.4" width="14" height="1.6" fill="#b5552a" stroke="none"/><path d="M5.2 1 V3.6 M8.4 1 V3.6 M11.6 1 V3.6 M14.8 1 V3.6" stroke="#1d5fa8" stroke-width="1.3" stroke-linecap="butt"/><path d="M5 6.4 H15 M5 8.8 H15 M5 11.2 H15 M5 13.6 H15" stroke="#1468a8" stroke-width="1.1" stroke-linecap="butt"/></svg></span><span class="mit" style="left:52.5px">Edit in Notepad</span></div>
<div class="mi" style="top:449px;height:38px;line-height:38px;font-size:16.6px"><span class="mic" style="left:18px"><svg width="22" height="22" viewBox="0 0 20 20" fill="none" stroke-linecap="round" stroke-linejoin="round" stroke-width="1.15" ><path d="M10.2 2 C5.2 2 1.6 5.6 1.8 10 C2 14.4 5.4 17.6 8.6 17.4 C10.4 17.3 10.2 15.4 9.6 14.4 C9 13.2 10 12 11.6 12.2 C15 12.6 18.4 11.4 18.2 8 C18 4.6 14.4 2 10.2 2 Z" fill="#4aa8e8" stroke="none"/><path d="M10.2 2 C6.5 2 3.6 4 2.4 6.8 L9 10 Z" fill="#58c27a" stroke="none"/><circle cx="6" cy="7" r="1.5" fill="#f2c94c" stroke="none"/><circle cx="10.2" cy="5" r="1.5" fill="#e85d4a" stroke="none"/><circle cx="14.4" cy="6.6" r="1.5" fill="#2458c8" stroke="none"/><circle cx="5.2" cy="11.6" r="1.5" fill="#2a3fae" stroke="none"/><path d="M15.4 9.6 L12.2 17.6 L13.8 18.4 L17 10.4 Z" fill="#b5652a" stroke="none"/><path d="M12.2 17.6 L11.6 19.6 L13.8 18.4 Z" fill="#3a3a3a" stroke="none"/></svg></span><span class="mit" style="left:52.5px">Edit with Paint</span></div>
<div class="mi" style="top:488px;height:38px;line-height:38px;font-size:16.6px"><span class="mic" style="left:18px"><svg width="22" height="22" viewBox="0 0 20 20" fill="none" stroke-linecap="round" stroke-linejoin="round" stroke-width="1.15" ><defs><linearGradient id="pg58" x1="0" y1="0" x2="1" y2="1"><stop offset="0" stop-color="#1a4fc4"/><stop offset="1" stop-color="#2a7be8"/></linearGradient></defs><rect x="2" y="2" width="16" height="16" rx="2.2" fill="url(#pg58)" stroke="none"/><path d="M2 16 L9.5 8 L13 12 L10 18 H4.2 A2.2 2.2 0 0 1 2 15.8 Z" fill="#4fc3f7" stroke="none"/><path d="M7 18 L13.6 10.5 L18 15 V15.8 A2.2 2.2 0 0 1 15.8 18 Z" fill="#2196f3" stroke="none"/><circle cx="14.2" cy="5.6" r="1.3" fill="#fff" stroke="none"/></svg></span><span class="mit" style="left:52.5px">Photos</span><span class="mch" style="left:365px"><svg width="16" height="16" viewBox="0 0 20 20" fill="none" stroke-linecap="round" stroke-linejoin="round" stroke-width="1.15" ><path d="M7.5 4.5 L13 10 L7.5 15.5" stroke="#5a5a5a" stroke-width="1.2"/></svg></span></div>
<div class="mi" style="top:538px;height:38px;line-height:38px;font-size:16.6px"><span class="mic" style="left:18px"><svg width="22" height="22" viewBox="0 0 20 20" fill="none" stroke-linecap="round" stroke-linejoin="round" stroke-width="1.15" ><path d="M9 3 H5 A2.2 2.2 0 0 0 2.8 5.2 V15 A2.2 2.2 0 0 0 5 17.2 H14.8 A2.2 2.2 0 0 0 17 15 V11" stroke="#505050"/><path d="M2.8 11.2 H6.6 A2.2 2.2 0 0 1 8.8 13.4 V17.2" stroke="#505050"/><path d="M11.6 2.8 H17.2 V8.4 M17 3 L11.2 8.8" stroke="#1a80d6"/></svg></span><span class="mit" style="left:52.5px">Show more options</span></div>
<i class="hsep" style="top:352px;left:8px;right:0"></i>
<i class="hsep" style="top:402.5px;left:8px;right:0"></i>
<i class="hsep" style="top:530.5px;left:8px;right:0"></i>
</div>
<div class="menu sub" style="left:619px;top:529px;width:302px;height:204px">
<div class="mi" style="top:5px;height:38px;line-height:38px;font-size:16.6px"><span class="mic" style="left:17px"><svg width="22" height="22" viewBox="0 0 20 20" fill="none" stroke-linecap="round" stroke-linejoin="round" stroke-width="1.15" ><path d="M2 5.5 A2 2 0 0 1 4 3.5 H7.2 L9 5.3 H16 A2 2 0 0 1 18 7.3 V14.5 A2 2 0 0 1 16 16.5 H4 A2 2 0 0 1 2 14.5 Z M2 7.6 H7.4 L9 5.4" stroke="#505050"/><path d="M13.6 5.6 V7.4 M14.6 7.4 V9.2 M13.6 9.2 V11 M14.6 11 V12.8 M13.6 12.8 V14.6 M14.6 14.6 V16.2" stroke="#1a80d6" stroke-width="1.3" stroke-linecap="butt"/></svg></span><span class="mit" style="left:52px">Compress to...</span><span class="mch" style="left:268px"><svg width="16" height="16" viewBox="0 0 20 20" fill="none" stroke-linecap="round" stroke-linejoin="round" stroke-width="1.15" ><path d="M7.5 4.5 L13 10 L7.5 15.5" stroke="#5a5a5a" stroke-width="1.2"/></svg></span></div>
<div class="mi" style="top:45px;height:38px;line-height:38px;font-size:16.6px"><span class="mic" style="left:17px"><svg width="22" height="22" viewBox="0 0 20 20" fill="none" stroke-linecap="round" stroke-linejoin="round" stroke-width="1.15" ><rect x="1.8" y="4" width="16.4" height="12" rx="2.2" stroke="#505050"/><path d="M4.6 6.6 L7 13.4 M7.2 6.6 L9.6 13.4" stroke="#1a80d6"/><path d="M11.4 13.2 H11.6 M13.6 13.2 H13.8 M15.6 13.2 H15.8" stroke="#505050" stroke-width="1.3"/></svg></span><span class="mit" style="left:52px">Copy as path</span><span class="msc" style="left:202px">Ctrl+Shift+C</span></div>
<div class="mi" style="top:85px;height:38px;line-height:38px;font-size:16.6px"><span class="mic" style="left:17px"><svg width="22" height="22" viewBox="0 0 20 20" fill="none" stroke-linecap="round" stroke-linejoin="round" stroke-width="1.15" ><path d="M2.5 17.5 H17.5 V10.5 Z" stroke="#505050"/><path d="M9.5 10.2 C4.5 10 3 8 3.6 6 C4.2 4.2 7 3.6 11 3.6 H16.4 M13.8 1 L16.6 3.6 L13.8 6.2" stroke="#1a80d6"/></svg></span><span class="mit" style="left:52px">Rotate right</span></div>
<div class="mi" style="top:125px;height:38px;line-height:38px;font-size:16.6px"><span class="mic" style="left:17px"><svg width="22" height="22" viewBox="0 0 20 20" fill="none" stroke-linecap="round" stroke-linejoin="round" stroke-width="1.15" ><path d="M17.5 17.5 H2.5 V10.5 Z" stroke="#505050"/><path d="M10.5 10.2 C15.5 10 17 8 16.4 6 C15.8 4.2 13 3.6 9 3.6 H3.6 M6.2 1 L3.4 3.6 L6.2 6.2" stroke="#1a80d6"/></svg></span><span class="mit" style="left:52px">Rotate left</span></div>
<div class="mi" style="top:165px;height:38px;line-height:38px;font-size:16.6px"><span class="mic" style="left:17px"><svg width="22" height="22" viewBox="0 0 20 20" fill="none" stroke-linecap="round" stroke-linejoin="round" stroke-width="1.15" ><path d="M11 5 H16 A2 2 0 0 1 18 7 V14 A2 2 0 0 1 16 16 H4 A2 2 0 0 1 2 14 V11.5 M2.2 13 H17.8" stroke="#505050"/><rect x="1.6" y="1.6" width="9" height="9" rx="1.4" fill="#1a80d6" stroke="none"/><path d="M2.6 10 L6 6.8 L9.6 10 Z" fill="#fff" stroke="none"/><circle cx="7.8" cy="4.2" r=".9" fill="#fff" stroke="none"/></svg></span><span class="mit" style="left:52px">Set as desktop background</span></div>
</div>
<div class="pill" style="left:859px;top:13px;width:88px;font-size:27px;letter-spacing:-.2px">After</div>
</div>
</body></html>
